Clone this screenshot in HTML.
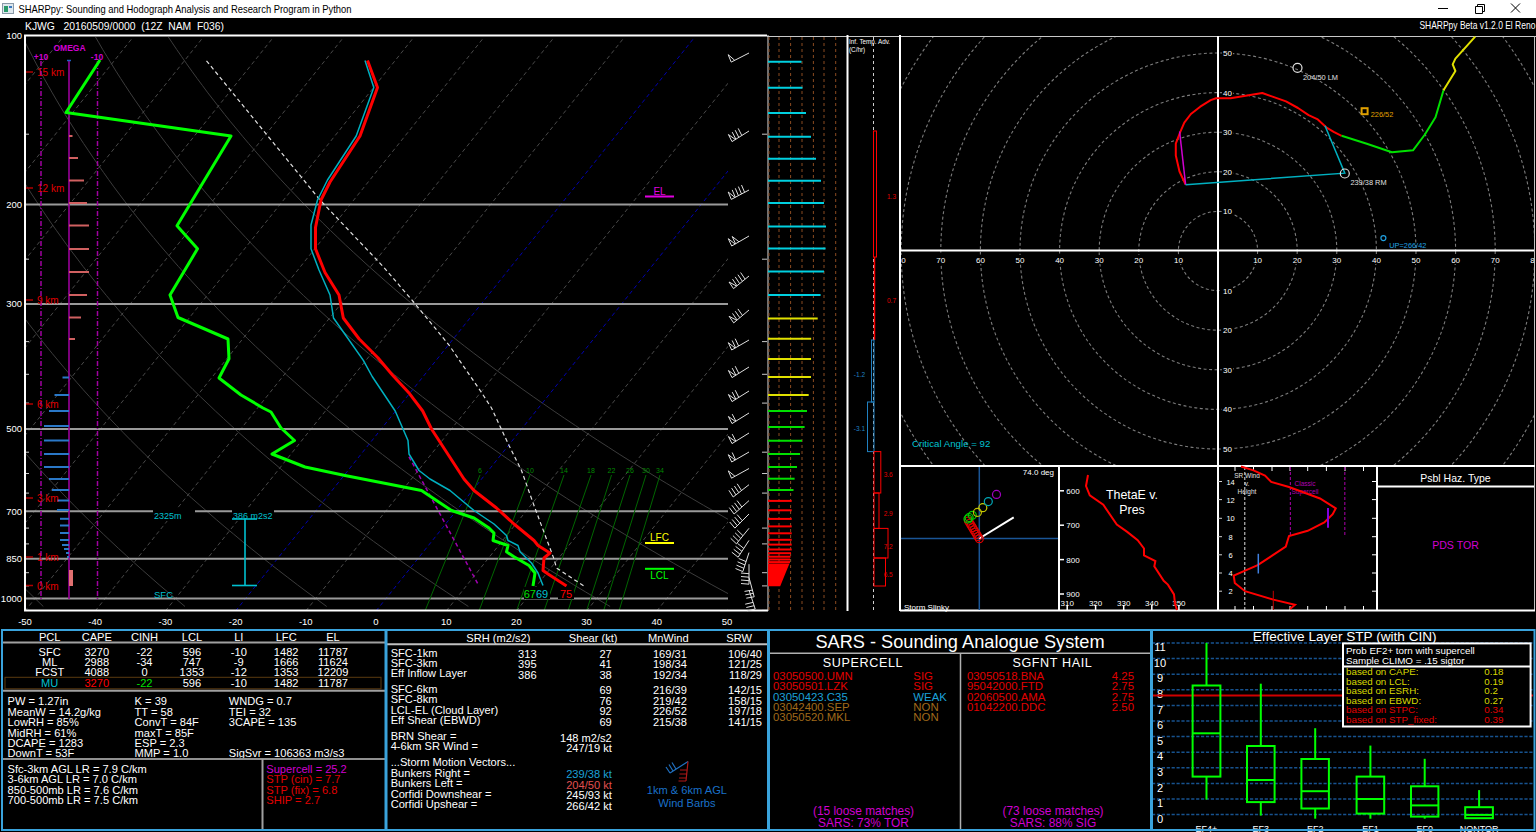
<!DOCTYPE html>
<html><head><meta charset="utf-8"><style>
html,body{margin:0;padding:0;background:#000;width:1536px;height:832px;overflow:hidden}
svg{display:block}
text{font-family:"Liberation Sans",sans-serif}
</style></head><body>
<svg width="1536" height="832" viewBox="0 0 1536 832">
<rect x="0" y="0" width="1536" height="832" fill="#000"/>
<clipPath id="skc"><rect x="26" y="37" width="702" height="573"/></clipPath>
<g clip-path="url(#skc)">
<polyline points="-414.8,35 -414.9,42.2 -415,49.5 -415,56.7 -415,63.9 -415,71.2 -414.9,78.4 -414.7,85.6 -414.5,92.9 -414.3,100.1 -413.9,107.3 -413.6,114.6 -413.2,121.8 -412.7,129 -412.2,136.3 -411.6,143.5 -411,150.7 -410.3,158 -409.6,165.2 -408.8,172.4 -408,179.7 -407.1,186.9 -406.1,194.1 -405.1,201.4 -404,208.6 -402.9,215.8 -401.7,223.1 -400.5,230.3 -399.1,237.5 -397.8,244.8 -396.4,252 -394.9,259.2 -393.3,266.5 -391.7,273.7 -390,280.9 -388.3,288.2 -386.5,295.4 -384.6,302.6 -382.7,309.9 -380.7,317.1 -378.6,324.4 -376.5,331.6 -374.3,338.8 -372,346.1 -369.7,353.3 -367.3,360.5 -364.8,367.8 -362.3,375 -359.7,382.2 -357,389.5 -354.2,396.7 -351.4,403.9 -348.5,411.2 -345.5,418.4 -342.5,425.6 -339.4,432.9 -336.2,440.1 -332.9,447.3 -329.5,454.6 -326.1,461.8 -322.6,469 -319,476.3 -315.3,483.5 -311.6,490.7 -307.8,498 -303.8,505.2 -299.9,512.4 -295.8,519.7 -291.6,526.9 -287.4,534.1 -283.1,541.4 -278.6,548.6 -274.1,555.8 -269.6,563.1 -264.9,570.3 -260.1,577.5 -255.3,584.8 -250.3,592 -245.3,599.2 -240.2,606.5" fill="none" stroke="#3c3c3c" stroke-width="1" />
<polyline points="-342,35 -341.6,42.2 -341,49.5 -340.4,56.7 -339.8,63.9 -339.1,71.2 -338.4,78.4 -337.6,85.6 -336.7,92.9 -335.8,100.1 -334.8,107.3 -333.8,114.6 -332.7,121.8 -331.6,129 -330.3,136.3 -329.1,143.5 -327.8,150.7 -326.4,158 -324.9,165.2 -323.4,172.4 -321.9,179.7 -320.2,186.9 -318.5,194.1 -316.8,201.4 -315,208.6 -313.1,215.8 -311.1,223.1 -309.1,230.3 -307,237.5 -304.9,244.8 -302.7,252 -300.4,259.2 -298,266.5 -295.6,273.7 -293.1,280.9 -290.6,288.2 -287.9,295.4 -285.2,302.6 -282.4,309.9 -279.6,317.1 -276.7,324.4 -273.7,331.6 -270.6,338.8 -267.5,346.1 -264.2,353.3 -260.9,360.5 -257.6,367.8 -254.1,375 -250.6,382.2 -247,389.5 -243.3,396.7 -239.5,403.9 -235.7,411.2 -231.7,418.4 -227.7,425.6 -223.6,432.9 -219.5,440.1 -215.2,447.3 -210.8,454.6 -206.4,461.8 -201.9,469 -197.3,476.3 -192.6,483.5 -187.8,490.7 -182.9,498 -177.9,505.2 -172.9,512.4 -167.7,519.7 -162.5,526.9 -157.1,534.1 -151.7,541.4 -146.2,548.6 -140.6,555.8 -134.8,563.1 -129,570.3 -123.1,577.5 -117.1,584.8 -111,592 -104.8,599.2 -98.4,606.5" fill="none" stroke="#3c3c3c" stroke-width="1" />
<polyline points="-269.3,35 -268.2,42.2 -267.1,49.5 -265.9,56.7 -264.6,63.9 -263.3,71.2 -261.9,78.4 -260.4,85.6 -258.9,92.9 -257.3,100.1 -255.7,107.3 -254,114.6 -252.2,121.8 -250.4,129 -248.5,136.3 -246.5,143.5 -244.5,150.7 -242.4,158 -240.3,165.2 -238,172.4 -235.8,179.7 -233.4,186.9 -231,194.1 -228.5,201.4 -225.9,208.6 -223.3,215.8 -220.5,223.1 -217.8,230.3 -214.9,237.5 -212,244.8 -209,252 -205.9,259.2 -202.7,266.5 -199.5,273.7 -196.2,280.9 -192.8,288.2 -189.4,295.4 -185.8,302.6 -182.2,309.9 -178.5,317.1 -174.7,324.4 -170.9,331.6 -166.9,338.8 -162.9,346.1 -158.8,353.3 -154.6,360.5 -150.3,367.8 -146,375 -141.5,382.2 -137,389.5 -132.4,396.7 -127.7,403.9 -122.9,411.2 -118,418.4 -113,425.6 -107.9,432.9 -102.8,440.1 -97.5,447.3 -92.2,454.6 -86.7,461.8 -81.2,469 -75.5,476.3 -69.8,483.5 -64,490.7 -58.1,498 -52,505.2 -45.9,512.4 -39.7,519.7 -33.3,526.9 -26.9,534.1 -20.4,541.4 -13.7,548.6 -7,555.8 -0.1,563.1 6.8,570.3 13.9,577.5 21.1,584.8 28.4,592 35.8,599.2 43.3,606.5" fill="none" stroke="#3c3c3c" stroke-width="1" />
<polyline points="-196.6,35 -194.9,42.2 -193.1,49.5 -191.3,56.7 -189.4,63.9 -187.4,71.2 -185.4,78.4 -183.3,85.6 -181.1,92.9 -178.9,100.1 -176.6,107.3 -174.2,114.6 -171.7,121.8 -169.2,129 -166.7,136.3 -164,143.5 -161.3,150.7 -158.5,158 -155.6,165.2 -152.7,172.4 -149.7,179.7 -146.6,186.9 -143.4,194.1 -140.2,201.4 -136.8,208.6 -133.4,215.8 -130,223.1 -126.4,230.3 -122.8,237.5 -119.1,244.8 -115.3,252 -111.4,259.2 -107.5,266.5 -103.4,273.7 -99.3,280.9 -95.1,288.2 -90.8,295.4 -86.4,302.6 -82,309.9 -77.4,317.1 -72.8,324.4 -68.1,331.6 -63.2,338.8 -58.3,346.1 -53.3,353.3 -48.3,360.5 -43.1,367.8 -37.8,375 -32.5,382.2 -27,389.5 -21.4,396.7 -15.8,403.9 -10,411.2 -4.2,418.4 1.7,425.6 7.8,432.9 13.9,440.1 20.2,447.3 26.5,454.6 33,461.8 39.5,469 46.2,476.3 53,483.5 59.8,490.7 66.8,498 73.9,505.2 81.1,512.4 88.4,519.7 95.8,526.9 103.3,534.1 111,541.4 118.7,548.6 126.6,555.8 134.6,563.1 142.7,570.3 150.9,577.5 159.2,584.8 167.7,592 176.3,599.2 185,606.5" fill="none" stroke="#3c3c3c" stroke-width="1" />
<polyline points="-123.9,35 -121.5,42.2 -119.1,49.5 -116.7,56.7 -114.1,63.9 -111.5,71.2 -108.9,78.4 -106.1,85.6 -103.3,92.9 -100.4,100.1 -97.4,107.3 -94.4,114.6 -91.3,121.8 -88.1,129 -84.8,136.3 -81.5,143.5 -78,150.7 -74.5,158 -71,165.2 -67.3,172.4 -63.6,179.7 -59.7,186.9 -55.8,194.1 -51.8,201.4 -47.8,208.6 -43.6,215.8 -39.4,223.1 -35.1,230.3 -30.7,237.5 -26.2,244.8 -21.6,252 -16.9,259.2 -12.2,266.5 -7.3,273.7 -2.4,280.9 2.6,288.2 7.8,295.4 13,302.6 18.3,309.9 23.7,317.1 29.2,324.4 34.8,331.6 40.4,338.8 46.2,346.1 52.1,353.3 58.1,360.5 64.2,367.8 70.3,375 76.6,382.2 83,389.5 89.5,396.7 96.1,403.9 102.8,411.2 109.6,418.4 116.5,425.6 123.5,432.9 130.6,440.1 137.9,447.3 145.2,454.6 152.7,461.8 160.2,469 167.9,476.3 175.7,483.5 183.6,490.7 191.6,498 199.8,505.2 208.1,512.4 216.4,519.7 224.9,526.9 233.6,534.1 242.3,541.4 251.2,548.6 260.2,555.8 269.3,563.1 278.5,570.3 287.9,577.5 297.4,584.8 307,592 316.8,599.2 326.7,606.5" fill="none" stroke="#3c3c3c" stroke-width="1" />
<polyline points="-51.1,35 -48.2,42.2 -45.2,49.5 -42.1,56.7 -38.9,63.9 -35.7,71.2 -32.4,78.4 -29,85.6 -25.5,92.9 -21.9,100.1 -18.3,107.3 -14.6,114.6 -10.8,121.8 -6.9,129 -3,136.3 1.1,143.5 5.2,150.7 9.4,158 13.7,165.2 18.1,172.4 22.6,179.7 27.1,186.9 31.7,194.1 36.5,201.4 41.3,208.6 46.2,215.8 51.2,223.1 56.3,230.3 61.5,237.5 66.7,244.8 72.1,252 77.6,259.2 83.1,266.5 88.8,273.7 94.5,280.9 100.4,288.2 106.3,295.4 112.4,302.6 118.5,309.9 124.8,317.1 131.1,324.4 137.6,331.6 144.1,338.8 150.8,346.1 157.5,353.3 164.4,360.5 171.4,367.8 178.5,375 185.7,382.2 193,389.5 200.4,396.7 208,403.9 215.6,411.2 223.4,418.4 231.2,425.6 239.2,432.9 247.3,440.1 255.5,447.3 263.9,454.6 272.4,461.8 280.9,469 289.6,476.3 298.5,483.5 307.4,490.7 316.5,498 325.7,505.2 335,512.4 344.5,519.7 354.1,526.9 363.8,534.1 373.6,541.4 383.6,548.6 393.7,555.8 404,563.1 414.4,570.3 424.9,577.5 435.6,584.8 446.4,592 457.3,599.2 468.4,606.5" fill="none" stroke="#3c3c3c" stroke-width="1" />
<polyline points="21.6,35 25.1,42.2 28.8,49.5 32.5,56.7 36.3,63.9 40.2,71.2 44.1,78.4 48.2,85.6 52.3,92.9 56.5,100.1 60.8,107.3 65.2,114.6 69.7,121.8 74.2,129 78.9,136.3 83.6,143.5 88.5,150.7 93.4,158 98.4,165.2 103.5,172.4 108.7,179.7 113.9,186.9 119.3,194.1 124.8,201.4 130.3,208.6 136,215.8 141.8,223.1 147.6,230.3 153.6,237.5 159.6,244.8 165.8,252 172,259.2 178.4,266.5 184.9,273.7 191.4,280.9 198.1,288.2 204.9,295.4 211.8,302.6 218.7,309.9 225.8,317.1 233.1,324.4 240.4,331.6 247.8,338.8 255.3,346.1 263,353.3 270.8,360.5 278.6,367.8 286.6,375 294.8,382.2 303,389.5 311.3,396.7 319.8,403.9 328.4,411.2 337.1,418.4 346,425.6 354.9,432.9 364,440.1 373.2,447.3 382.6,454.6 392,461.8 401.6,469 411.4,476.3 421.2,483.5 431.2,490.7 441.4,498 451.6,505.2 462,512.4 472.5,519.7 483.2,526.9 494,534.1 505,541.4 516.1,548.6 527.3,555.8 538.7,563.1 550.2,570.3 561.9,577.5 573.7,584.8 585.7,592 597.8,599.2 610.1,606.5" fill="none" stroke="#3c3c3c" stroke-width="1" />
<polyline points="94.3,35 98.5,42.2 102.7,49.5 107.1,56.7 111.5,63.9 116,71.2 120.6,78.4 125.3,85.6 130.1,92.9 135,100.1 140,107.3 145,114.6 150.2,121.8 155.4,129 160.7,136.3 166.2,143.5 171.7,150.7 177.3,158 183,165.2 188.8,172.4 194.8,179.7 200.8,186.9 206.9,194.1 213.1,201.4 219.4,208.6 225.8,215.8 232.3,223.1 239,230.3 245.7,237.5 252.5,244.8 259.5,252 266.5,259.2 273.7,266.5 281,273.7 288.3,280.9 295.8,288.2 303.4,295.4 311.2,302.6 319,309.9 326.9,317.1 335,324.4 343.2,331.6 351.5,338.8 359.9,346.1 368.4,353.3 377.1,360.5 385.9,367.8 394.8,375 403.8,382.2 413,389.5 422.3,396.7 431.7,403.9 441.2,411.2 450.9,418.4 460.7,425.6 470.6,432.9 480.7,440.1 490.9,447.3 501.3,454.6 511.7,461.8 522.3,469 533.1,476.3 544,483.5 555,490.7 566.2,498 577.5,505.2 589,512.4 600.6,519.7 612.4,526.9 624.3,534.1 636.3,541.4 648.5,548.6 660.9,555.8 673.4,563.1 686.1,570.3 698.9,577.5 711.9,584.8 725.1,592 738.4,599.2 751.8,606.5" fill="none" stroke="#3c3c3c" stroke-width="1" />
<polyline points="167,35 171.8,42.2 176.7,49.5 181.7,56.7 186.7,63.9 191.9,71.2 197.1,78.4 202.5,85.6 207.9,92.9 213.5,100.1 219.1,107.3 224.8,114.6 230.6,121.8 236.6,129 242.6,136.3 248.7,143.5 254.9,150.7 261.3,158 267.7,165.2 274.2,172.4 280.9,179.7 287.6,186.9 294.5,194.1 301.4,201.4 308.5,208.6 315.6,215.8 322.9,223.1 330.3,230.3 337.8,237.5 345.4,244.8 353.2,252 361,259.2 369,266.5 377.1,273.7 385.2,280.9 393.6,288.2 402,295.4 410.6,302.6 419.2,309.9 428,317.1 436.9,324.4 446,331.6 455.2,338.8 464.5,346.1 473.9,353.3 483.5,360.5 493.1,367.8 503,375 512.9,382.2 523,389.5 533.2,396.7 543.6,403.9 554.1,411.2 564.7,418.4 575.5,425.6 586.4,432.9 597.4,440.1 608.6,447.3 619.9,454.6 631.4,461.8 643.1,469 654.8,476.3 666.8,483.5 678.8,490.7 691.1,498 703.4,505.2 716,512.4 728.7,519.7 741.5,526.9 754.5,534.1 767.7,541.4 781,548.6 794.5,555.8 808.1,563.1 821.9,570.3 835.9,577.5 850.1,584.8 864.4,592 878.9,599.2 893.5,606.5" fill="none" stroke="#3c3c3c" stroke-width="1" />
<line x1="-747.2" y1="611" x2="-286.4" y2="35" stroke="#4a4a4a" stroke-width="1" stroke-dasharray="4,3"/>
<line x1="-677" y1="611" x2="-216.2" y2="35" stroke="#4a4a4a" stroke-width="1" stroke-dasharray="4,3"/>
<line x1="-606.8" y1="611" x2="-146" y2="35" stroke="#4a4a4a" stroke-width="1" stroke-dasharray="4,3"/>
<line x1="-536.6" y1="611" x2="-75.8" y2="35" stroke="#4a4a4a" stroke-width="1" stroke-dasharray="4,3"/>
<line x1="-466.4" y1="611" x2="-5.6" y2="35" stroke="#4a4a4a" stroke-width="1" stroke-dasharray="4,3"/>
<line x1="-396.2" y1="611" x2="64.6" y2="35" stroke="#4a4a4a" stroke-width="1" stroke-dasharray="4,3"/>
<line x1="-326" y1="611" x2="134.8" y2="35" stroke="#4a4a4a" stroke-width="1" stroke-dasharray="4,3"/>
<line x1="-255.8" y1="611" x2="205" y2="35" stroke="#4a4a4a" stroke-width="1" stroke-dasharray="4,3"/>
<line x1="-185.6" y1="611" x2="275.2" y2="35" stroke="#4a4a4a" stroke-width="1" stroke-dasharray="4,3"/>
<line x1="-115.4" y1="611" x2="345.4" y2="35" stroke="#4a4a4a" stroke-width="1" stroke-dasharray="4,3"/>
<line x1="-45.2" y1="611" x2="415.6" y2="35" stroke="#4a4a4a" stroke-width="1" stroke-dasharray="4,3"/>
<line x1="25" y1="611" x2="485.8" y2="35" stroke="#4a4a4a" stroke-width="1" stroke-dasharray="4,3"/>
<line x1="95.2" y1="611" x2="556" y2="35" stroke="#4a4a4a" stroke-width="1" stroke-dasharray="4,3"/>
<line x1="165.4" y1="611" x2="626.2" y2="35" stroke="#4a4a4a" stroke-width="1" stroke-dasharray="4,3"/>
<line x1="235.6" y1="611" x2="696.4" y2="35" stroke="#0000b0" stroke-width="1" stroke-dasharray="4,3"/>
<line x1="305.8" y1="611" x2="766.6" y2="35" stroke="#4a4a4a" stroke-width="1" stroke-dasharray="4,3"/>
<line x1="376" y1="611" x2="836.8" y2="35" stroke="#0000b0" stroke-width="1" stroke-dasharray="4,3"/>
<line x1="446.2" y1="611" x2="907" y2="35" stroke="#4a4a4a" stroke-width="1" stroke-dasharray="4,3"/>
<line x1="516.4" y1="611" x2="977.2" y2="35" stroke="#4a4a4a" stroke-width="1" stroke-dasharray="4,3"/>
<line x1="586.6" y1="611" x2="1047.4" y2="35" stroke="#4a4a4a" stroke-width="1" stroke-dasharray="4,3"/>
<line x1="656.8" y1="611" x2="1117.6" y2="35" stroke="#4a4a4a" stroke-width="1" stroke-dasharray="4,3"/>
<line x1="727" y1="611" x2="1187.8" y2="35" stroke="#4a4a4a" stroke-width="1" stroke-dasharray="4,3"/>
</g>
<line x1="26" y1="204.6" x2="728" y2="204.6" stroke="#9a9a9a" stroke-width="2" />
<line x1="26" y1="303.9" x2="728" y2="303.9" stroke="#9a9a9a" stroke-width="2" />
<line x1="26" y1="428.9" x2="728" y2="428.9" stroke="#9a9a9a" stroke-width="2" />
<line x1="26" y1="511.2" x2="728" y2="511.2" stroke="#9a9a9a" stroke-width="2" />
<line x1="26" y1="558.7" x2="728" y2="558.7" stroke="#9a9a9a" stroke-width="2" />
<line x1="26" y1="598.5" x2="728" y2="598.5" stroke="#9a9a9a" stroke-width="2" />
<line x1="24" y1="134.2" x2="29" y2="134.2" stroke="#c8c8c8" stroke-width="1" />
<line x1="762" y1="134.2" x2="767" y2="134.2" stroke="#c8c8c8" stroke-width="1" />
<line x1="24" y1="259.2" x2="29" y2="259.2" stroke="#c8c8c8" stroke-width="1" />
<line x1="762" y1="259.2" x2="767" y2="259.2" stroke="#c8c8c8" stroke-width="1" />
<line x1="24" y1="341.6" x2="29" y2="341.6" stroke="#c8c8c8" stroke-width="1" />
<line x1="762" y1="341.6" x2="767" y2="341.6" stroke="#c8c8c8" stroke-width="1" />
<line x1="24" y1="374.3" x2="29" y2="374.3" stroke="#c8c8c8" stroke-width="1" />
<line x1="762" y1="374.3" x2="767" y2="374.3" stroke="#c8c8c8" stroke-width="1" />
<line x1="24" y1="403.1" x2="29" y2="403.1" stroke="#c8c8c8" stroke-width="1" />
<line x1="762" y1="403.1" x2="767" y2="403.1" stroke="#c8c8c8" stroke-width="1" />
<line x1="24" y1="452.2" x2="29" y2="452.2" stroke="#c8c8c8" stroke-width="1" />
<line x1="762" y1="452.2" x2="767" y2="452.2" stroke="#c8c8c8" stroke-width="1" />
<line x1="24" y1="473.5" x2="29" y2="473.5" stroke="#c8c8c8" stroke-width="1" />
<line x1="762" y1="473.5" x2="767" y2="473.5" stroke="#c8c8c8" stroke-width="1" />
<line x1="24" y1="493.1" x2="29" y2="493.1" stroke="#c8c8c8" stroke-width="1" />
<line x1="762" y1="493.1" x2="767" y2="493.1" stroke="#c8c8c8" stroke-width="1" />
<line x1="24" y1="528.1" x2="29" y2="528.1" stroke="#c8c8c8" stroke-width="1" />
<line x1="762" y1="528.1" x2="767" y2="528.1" stroke="#c8c8c8" stroke-width="1" />
<line x1="24" y1="543.9" x2="29" y2="543.9" stroke="#c8c8c8" stroke-width="1" />
<line x1="762" y1="543.9" x2="767" y2="543.9" stroke="#c8c8c8" stroke-width="1" />
<line x1="24" y1="572.7" x2="29" y2="572.7" stroke="#c8c8c8" stroke-width="1" />
<line x1="762" y1="572.7" x2="767" y2="572.7" stroke="#c8c8c8" stroke-width="1" />
<line x1="24" y1="585.9" x2="29" y2="585.9" stroke="#c8c8c8" stroke-width="1" />
<line x1="762" y1="585.9" x2="767" y2="585.9" stroke="#c8c8c8" stroke-width="1" />
<line x1="24" y1="610.4" x2="29" y2="610.4" stroke="#c8c8c8" stroke-width="1" />
<line x1="762" y1="610.4" x2="767" y2="610.4" stroke="#c8c8c8" stroke-width="1" />
<line x1="480" y1="475" x2="425" y2="611" stroke="#006600" stroke-width="1" />
<text x="480" y="473" fill="#008800" font-size="7" text-anchor="middle" >6</text>
<line x1="530" y1="475" x2="479" y2="611" stroke="#006600" stroke-width="1" />
<text x="530" y="473" fill="#008800" font-size="7" text-anchor="middle" >10</text>
<line x1="564" y1="475" x2="516.5" y2="611" stroke="#006600" stroke-width="1" />
<text x="564" y="473" fill="#008800" font-size="7" text-anchor="middle" >14</text>
<line x1="591" y1="475" x2="544" y2="611" stroke="#006600" stroke-width="1" />
<text x="591" y="473" fill="#008800" font-size="7" text-anchor="middle" >18</text>
<line x1="611.5" y1="475" x2="568" y2="611" stroke="#006600" stroke-width="1" />
<text x="611.5" y="473" fill="#008800" font-size="7" text-anchor="middle" >22</text>
<line x1="630" y1="475" x2="586.5" y2="611" stroke="#006600" stroke-width="1" />
<text x="630" y="473" fill="#008800" font-size="7" text-anchor="middle" >26</text>
<line x1="646" y1="475" x2="603.5" y2="611" stroke="#006600" stroke-width="1" />
<text x="646" y="473" fill="#008800" font-size="7" text-anchor="middle" >30</text>
<line x1="660" y1="475" x2="619" y2="611" stroke="#006600" stroke-width="1" />
<text x="660" y="473" fill="#008800" font-size="7" text-anchor="middle" >34</text>
<line x1="69" y1="60" x2="69" y2="599" stroke="#9a009a" stroke-width="1.6" />
<line x1="41" y1="61" x2="41" y2="599" stroke="#a000a0" stroke-width="1.5" stroke-dasharray="5,2,1,2"/>
<line x1="97.5" y1="61" x2="97.5" y2="599" stroke="#a000a0" stroke-width="1.5" stroke-dasharray="5,2,1,2"/>
<line x1="67" y1="60.5" x2="71" y2="60.5" stroke="#2060c0" stroke-width="1.5" />
<text x="69.5" y="50.8" fill="#d000d0" font-size="8.5" text-anchor="middle" font-weight="bold">OMEGA</text>
<text x="41" y="59.8" fill="#d000d0" font-size="8.5" text-anchor="middle" font-weight="bold">+10</text>
<text x="97" y="59.8" fill="#d000d0" font-size="8.5" text-anchor="middle" font-weight="bold">-10</text>
<line x1="69" y1="136" x2="72.5" y2="136" stroke="#d06060" stroke-width="2" />
<line x1="69" y1="158" x2="78" y2="158" stroke="#d06060" stroke-width="2" />
<line x1="69" y1="180.5" x2="84" y2="180.5" stroke="#d06060" stroke-width="2" />
<line x1="69" y1="203" x2="87" y2="203" stroke="#d06060" stroke-width="2" />
<line x1="69" y1="225.5" x2="89" y2="225.5" stroke="#d06060" stroke-width="2" />
<line x1="69" y1="249" x2="89" y2="249" stroke="#d06060" stroke-width="2" />
<line x1="69" y1="272" x2="89" y2="272" stroke="#d06060" stroke-width="2" />
<line x1="69" y1="295" x2="87" y2="295" stroke="#d06060" stroke-width="2" />
<line x1="69" y1="317.5" x2="81" y2="317.5" stroke="#d06060" stroke-width="2" />
<line x1="69" y1="339" x2="75" y2="339" stroke="#d06060" stroke-width="2" />
<line x1="62.5" y1="377.5" x2="69" y2="377.5" stroke="#2a78c8" stroke-width="2" />
<line x1="54.5" y1="395" x2="69" y2="395" stroke="#2a78c8" stroke-width="2" />
<line x1="49" y1="411" x2="69" y2="411" stroke="#2a78c8" stroke-width="2" />
<line x1="44" y1="426" x2="69" y2="426" stroke="#2a78c8" stroke-width="2" />
<line x1="44" y1="440.5" x2="69" y2="440.5" stroke="#2a78c8" stroke-width="2" />
<line x1="44" y1="454" x2="69" y2="454" stroke="#2a78c8" stroke-width="2" />
<line x1="44" y1="467" x2="69" y2="467" stroke="#2a78c8" stroke-width="2" />
<line x1="49" y1="479" x2="69" y2="479" stroke="#2a78c8" stroke-width="2" />
<line x1="52" y1="490" x2="69" y2="490" stroke="#2a78c8" stroke-width="2" />
<line x1="57" y1="500.5" x2="69" y2="500.5" stroke="#2a78c8" stroke-width="2" />
<line x1="57" y1="510" x2="69" y2="510" stroke="#2a78c8" stroke-width="2" />
<line x1="60" y1="518.8" x2="69" y2="518.8" stroke="#2a78c8" stroke-width="2" />
<line x1="60" y1="525.5" x2="69" y2="525.5" stroke="#2a78c8" stroke-width="2" />
<line x1="60" y1="533" x2="69" y2="533" stroke="#2a78c8" stroke-width="2" />
<line x1="60" y1="540" x2="69" y2="540" stroke="#2a78c8" stroke-width="2" />
<line x1="62" y1="545" x2="69" y2="545" stroke="#2a78c8" stroke-width="2" />
<line x1="64" y1="549" x2="69" y2="549" stroke="#2a78c8" stroke-width="2" />
<line x1="66" y1="553" x2="69" y2="553" stroke="#2a78c8" stroke-width="2" />
<line x1="67" y1="557" x2="69" y2="557" stroke="#2a78c8" stroke-width="2" />
<rect x="69" y="570" width="4" height="16" fill="#e07070" stroke="none" stroke-width="1" />
<line x1="25" y1="72" x2="33" y2="72" stroke="#b00000" stroke-width="1.5" />
<text x="37" y="76" fill="#e00000" font-size="10" text-anchor="start" >15 km</text>
<line x1="25" y1="188" x2="33" y2="188" stroke="#b00000" stroke-width="1.5" />
<text x="37" y="192" fill="#e00000" font-size="10" text-anchor="start" >12 km</text>
<line x1="25" y1="300" x2="33" y2="300" stroke="#b00000" stroke-width="1.5" />
<text x="37" y="304" fill="#e00000" font-size="10" text-anchor="start" >9 km</text>
<line x1="25" y1="404" x2="33" y2="404" stroke="#b00000" stroke-width="1.5" />
<text x="37" y="408" fill="#e00000" font-size="10" text-anchor="start" >6 km</text>
<line x1="25" y1="498" x2="33" y2="498" stroke="#b00000" stroke-width="1.5" />
<text x="37" y="502" fill="#e00000" font-size="10" text-anchor="start" >3 km</text>
<line x1="25" y1="557" x2="33" y2="557" stroke="#b00000" stroke-width="1.5" />
<text x="37" y="561" fill="#e00000" font-size="10" text-anchor="start" >1 km</text>
<line x1="25" y1="585.5" x2="33" y2="585.5" stroke="#b00000" stroke-width="1.5" />
<text x="37" y="589.5" fill="#e00000" font-size="10" text-anchor="start" >0 km</text>
<line x1="24" y1="35.5" x2="767" y2="35.5" stroke="#ffffff" stroke-width="2" />
<line x1="25" y1="35" x2="25" y2="611" stroke="#ffffff" stroke-width="2" />
<line x1="24" y1="610.5" x2="768" y2="610.5" stroke="#ffffff" stroke-width="2" />
<text x="22" y="38.5" fill="#ffffff" font-size="9.5" text-anchor="end" >100</text>
<text x="22" y="208.1" fill="#ffffff" font-size="9.5" text-anchor="end" >200</text>
<text x="22" y="307.4" fill="#ffffff" font-size="9.5" text-anchor="end" >300</text>
<text x="22" y="432.4" fill="#ffffff" font-size="9.5" text-anchor="end" >500</text>
<text x="22" y="514.7" fill="#ffffff" font-size="9.5" text-anchor="end" >700</text>
<text x="22" y="562.2" fill="#ffffff" font-size="9.5" text-anchor="end" >850</text>
<text x="22" y="602" fill="#ffffff" font-size="9.5" text-anchor="end" >1000</text>
<text x="25" y="624.5" fill="#ffffff" font-size="9.5" text-anchor="middle" >-50</text>
<text x="95.2" y="624.5" fill="#ffffff" font-size="9.5" text-anchor="middle" >-40</text>
<text x="165.4" y="624.5" fill="#ffffff" font-size="9.5" text-anchor="middle" >-30</text>
<text x="235.6" y="624.5" fill="#ffffff" font-size="9.5" text-anchor="middle" >-20</text>
<text x="305.8" y="624.5" fill="#ffffff" font-size="9.5" text-anchor="middle" >-10</text>
<text x="376" y="624.5" fill="#ffffff" font-size="9.5" text-anchor="middle" >0</text>
<text x="446.2" y="624.5" fill="#ffffff" font-size="9.5" text-anchor="middle" >10</text>
<text x="516.4" y="624.5" fill="#ffffff" font-size="9.5" text-anchor="middle" >20</text>
<text x="586.6" y="624.5" fill="#ffffff" font-size="9.5" text-anchor="middle" >30</text>
<text x="656.8" y="624.5" fill="#ffffff" font-size="9.5" text-anchor="middle" >40</text>
<text x="727" y="624.5" fill="#ffffff" font-size="9.5" text-anchor="middle" >50</text>
<polyline points="206.5,60.8 320,200 384,267.5 414,302.5 449,345 481.5,392.5 491.5,408 509,445.5 521.5,470.5 534,505.5 554,559 556.5,568 584,586" fill="none" stroke="#e0e0e0" stroke-width="1.2" stroke-dasharray="4,3"/>
<line x1="409" y1="456.8" x2="479" y2="586" stroke="#a000b0" stroke-width="1.5" stroke-dasharray="4,3"/>
<polyline points="100,60 66,112.5 231,136 192.5,200 177,225.8 197.5,248.8 170,295 178,317.5 228,339 229,358.8 219,378 241,395 263,408 271,412 281,428 294.5,440.5 272,454 305,467 345,475.5 421.5,490.5 451.5,510.5 474,518 489,528 494,533 493,540.5 508,545.5 506.5,551.8 514,556.8 529,565.5 535,573 533,586" fill="none" stroke="#00ff00" stroke-width="3" stroke-linejoin="round"/>
<polyline points="365,60.5 373.8,87.5 356.2,136 327.5,180 317.5,200 311,225 311,248.8 319,270 330,295 333.5,318 346.2,336 363.5,360.6 372.2,376.5 395.2,411 401.5,425.5 408,440.5 409,454 419,470.5 430,479 450,490.5 474,510.5 494,524 506.5,535.5 508,540.5 518,545.5 520,551.8 531.5,563 538,573 543,585.5" fill="none" stroke="#00b0c0" stroke-width="1.5" stroke-linejoin="round"/>
<polyline points="367.5,60.5 377.5,87.5 360,136 330,182 321,200 315.5,227.5 315.5,248.8 325,272.5 339,295 343.3,318 359.2,339 377.9,357.7 392.4,375 409.7,393.8 422.7,411 431.5,429 464,479 474,490.5 496.5,508 514,524 534,540.5 538,545.5 550,553 544,558 543,570.5 548,574 566.5,586" fill="none" stroke="#ff0000" stroke-width="3" stroke-linejoin="round"/>
<rect x="524" y="587" width="26" height="12" fill="#000" stroke="none" stroke-width="1" />
<text x="536" y="597.5" fill="#00e000" font-size="11" text-anchor="end" >67</text>
<text x="536" y="597.5" fill="#00c0d0" font-size="11" text-anchor="start" >69</text>
<rect x="558" y="587" width="16" height="12" fill="#000" stroke="none" stroke-width="1" />
<text x="566" y="597.5" fill="#ff0000" font-size="11" text-anchor="middle" >75</text>
<line x1="645" y1="543" x2="674" y2="543" stroke="#ffff00" stroke-width="2" />
<text x="659.5" y="541" fill="#ffff00" font-size="10" text-anchor="middle" >LFC</text>
<line x1="645" y1="568.8" x2="674" y2="568.8" stroke="#00ff00" stroke-width="2" />
<text x="659.5" y="579" fill="#00ff00" font-size="10" text-anchor="middle" >LCL</text>
<line x1="645" y1="196.5" x2="674" y2="196.5" stroke="#e000e0" stroke-width="2" />
<text x="659.5" y="195" fill="#e000e0" font-size="10" text-anchor="middle" >EL</text>
<rect x="153" y="509" width="42" height="12" fill="#000" stroke="none" stroke-width="1" />
<text x="154" y="519" fill="#00c0d0" font-size="9" text-anchor="start" >2325m</text>
<rect x="232" y="509" width="42" height="12" fill="#000" stroke="none" stroke-width="1" />
<text x="233" y="519" fill="#00c0d0" font-size="9" text-anchor="start" >386 m2s2</text>
<line x1="232" y1="519" x2="257" y2="519" stroke="#00c0d0" stroke-width="1.6" />
<line x1="245" y1="519" x2="245" y2="585.5" stroke="#00c0d0" stroke-width="1.6" />
<line x1="232" y1="585.5" x2="257" y2="585.5" stroke="#00c0d0" stroke-width="1.6" />
<text x="154" y="598" fill="#00c0d0" font-size="9.5" text-anchor="start" >SFC</text>
<path d="M749,53L731.2,62.1M731.2,62.1L728.2,54.7L734.7,60.3" fill="none" stroke="#e0e0e0" stroke-width="1"/>
<path d="M749,131L732,141.6M732,141.6L728.4,134.5L735.4,139.5M735.9,139.2L732.2,132.1M738.8,137.4L735.2,130.2M741.8,135.5L738.2,128.4" fill="none" stroke="#e0e0e0" stroke-width="1"/>
<path d="M749,190L731.3,199.4M731.3,199.4L728.2,192L734.9,197.5M735.3,197.3L732.2,189.9M738.4,195.6L735.3,188.3M741.5,194L738.4,186.6M744.6,192.3L741.5,185" fill="none" stroke="#e0e0e0" stroke-width="1"/>
<path d="M749,236L731.7,246M731.7,246L728.3,238.7L735.1,244M735.6,243.8L732.2,236.5L739,241.8" fill="none" stroke="#e0e0e0" stroke-width="1"/>
<path d="M749,276L733.5,288.6M733.5,288.6L729,282L736.6,286.1M737,285.8L732.5,279.1M739.7,283.6L735.2,276.9M742.4,281.3L737.9,274.7M745.1,279.1L740.6,272.5" fill="none" stroke="#e0e0e0" stroke-width="1"/>
<path d="M749,310L733.7,322.9M733.7,322.9L729.1,316.3L736.7,320.3M737.1,320L732.5,313.4M739.8,317.7L735.2,311.2M742.5,315.5L737.9,308.9" fill="none" stroke="#e0e0e0" stroke-width="1"/>
<path d="M749,340L731.7,350M731.7,350L728.3,342.7L735.1,348M735.6,347.8L732.2,340.5M738.6,346L735.2,338.7" fill="none" stroke="#e0e0e0" stroke-width="1"/>
<path d="M749,367L732,377.6M732,377.6L728.4,370.5L735.4,375.5M735.9,375.2L732.2,368.1M738.8,373.4L735.2,366.2" fill="none" stroke="#e0e0e0" stroke-width="1"/>
<path d="M749,391L732,401.6M732,401.6L728.4,394.5L735.4,399.5M735.9,399.2L732.2,392.1M738.8,397.4L735.2,390.2" fill="none" stroke="#e0e0e0" stroke-width="1"/>
<path d="M749,413L732,423.6M732,423.6L728.4,416.5L735.4,421.5M735.9,421.2L732.2,414.1" fill="none" stroke="#e0e0e0" stroke-width="1"/>
<path d="M749,433L732,443.6M732,443.6L728.4,436.5L735.4,441.5M735.9,441.2L732.2,434.1" fill="none" stroke="#e0e0e0" stroke-width="1"/>
<path d="M749,452L731.7,462M731.7,462L728.3,454.7L735.1,460M735.6,459.8L732.2,452.5" fill="none" stroke="#e0e0e0" stroke-width="1"/>
<path d="M749,468.5L731.5,478.2M731.5,478.2L728.3,470.9L735,476.3" fill="none" stroke="#e0e0e0" stroke-width="1"/>
<path d="M749,484.7L733.2,497M733.2,497L728.9,490.3M736,494.9L731.6,488.1M738.8,492.7L734.4,486M741.5,490.5L737.2,483.8" fill="none" stroke="#e0e0e0" stroke-width="1"/>
<path d="M749,500.6L734.1,514M734.1,514L729.3,507.6M736.7,511.6L731.9,505.3M739.3,509.3L734.5,502.9M741.9,507L737.1,500.6" fill="none" stroke="#e0e0e0" stroke-width="1"/>
<path d="M749,514L734.9,528.1M734.9,528.1L729.7,522M737.3,525.7L732.2,519.5M739.8,523.2L734.7,517.1M742.3,520.7L737.1,514.6" fill="none" stroke="#e0e0e0" stroke-width="1"/>
<path d="M749,528.3L736.4,543.8M736.4,543.8L730.7,538.3M738.6,541.1L732.9,535.6M740.8,538.4L735.1,532.8M743,535.7L737.3,530.1" fill="none" stroke="#e0e0e0" stroke-width="1"/>
<path d="M749,540.4L738.1,557.2M738.1,557.2L731.8,552.2M740,554.2L733.7,549.3M741.9,551.3L735.6,546.4M743.8,548.4L737.5,543.4" fill="none" stroke="#e0e0e0" stroke-width="1"/>
<path d="M749,552.6L742.8,571.6M742.8,571.6L735.5,568.5M743.9,568.3L736.5,565.2M745,565L737.6,561.8M746.1,561.6L738.7,558.5" fill="none" stroke="#e0e0e0" stroke-width="1"/>
<path d="M749,564.2L749,584.2M749,584.2L741,583.5M749,580.7L741,580M749,577.2L741,576.5M749,573.7L741,573" fill="none" stroke="#e0e0e0" stroke-width="1"/>
<path d="M749,577.5L754.2,596.8M754.2,596.8L746.3,598.2M753.3,593.4L745.4,594.8M752.4,590.1L744.5,591.4" fill="none" stroke="#e0e0e0" stroke-width="1"/>
<path d="M749,590L755.2,609M755.2,609L747.4,610.8M754.1,605.7L746.3,607.5M753,602.4L745.2,604.2" fill="none" stroke="#e0e0e0" stroke-width="1"/>
<line x1="779" y1="37" x2="779" y2="610" stroke="#8a4a20" stroke-width="1" stroke-dasharray="3,3"/>
<line x1="790.6" y1="37" x2="790.6" y2="610" stroke="#8a4a20" stroke-width="1" stroke-dasharray="3,3"/>
<line x1="802" y1="37" x2="802" y2="610" stroke="#8a4a20" stroke-width="1" stroke-dasharray="3,3"/>
<line x1="813.4" y1="37" x2="813.4" y2="610" stroke="#8a4a20" stroke-width="1" stroke-dasharray="3,3"/>
<line x1="824" y1="37" x2="824" y2="610" stroke="#8a4a20" stroke-width="1" stroke-dasharray="3,3"/>
<line x1="835.7" y1="37" x2="835.7" y2="610" stroke="#8a4a20" stroke-width="1" stroke-dasharray="3,3"/>
<line x1="768" y1="35" x2="768" y2="611" stroke="#e0e0e0" stroke-width="1" />
<line x1="769" y1="37" x2="769" y2="610" stroke="#8a4a20" stroke-width="1" stroke-dasharray="3,3"/>
<line x1="767" y1="36.5" x2="1536" y2="36.5" stroke="#c8c8c8" stroke-width="1" />
<line x1="847.5" y1="35" x2="847.5" y2="611" stroke="#ffffff" stroke-width="2" />
<line x1="900" y1="35" x2="900" y2="611" stroke="#ffffff" stroke-width="2" />
<line x1="768" y1="61.7" x2="801.5" y2="61.7" stroke="#00d0e0" stroke-width="2" />
<line x1="768" y1="87.7" x2="802.5" y2="87.7" stroke="#00d0e0" stroke-width="2" />
<line x1="768" y1="113" x2="806" y2="113" stroke="#00d0e0" stroke-width="2" />
<line x1="768" y1="136.7" x2="811" y2="136.7" stroke="#00d0e0" stroke-width="2" />
<line x1="768" y1="158.7" x2="816" y2="158.7" stroke="#00d0e0" stroke-width="2" />
<line x1="768" y1="180.7" x2="821" y2="180.7" stroke="#00d0e0" stroke-width="2" />
<line x1="768" y1="203" x2="824" y2="203" stroke="#00d0e0" stroke-width="2" />
<line x1="768" y1="226.5" x2="826" y2="226.5" stroke="#00d0e0" stroke-width="2" />
<line x1="768" y1="248.5" x2="825.6" y2="248.5" stroke="#00d0e0" stroke-width="2" />
<line x1="768" y1="271.6" x2="824" y2="271.6" stroke="#00d0e0" stroke-width="2" />
<line x1="768" y1="295" x2="820.6" y2="295" stroke="#00d0e0" stroke-width="2" />
<line x1="768" y1="318.5" x2="817.7" y2="318.5" stroke="#e0e000" stroke-width="2" />
<line x1="768" y1="338.8" x2="811.2" y2="338.8" stroke="#e0e000" stroke-width="2" />
<line x1="768" y1="359" x2="811" y2="359" stroke="#e0e000" stroke-width="2" />
<line x1="768" y1="377" x2="811" y2="377" stroke="#e0e000" stroke-width="2" />
<line x1="768" y1="395" x2="808.7" y2="395" stroke="#e0e000" stroke-width="2" />
<line x1="768" y1="411" x2="807" y2="411" stroke="#00e000" stroke-width="2" />
<line x1="768" y1="427" x2="804.6" y2="427" stroke="#00e000" stroke-width="2" />
<line x1="768" y1="440.8" x2="802" y2="440.8" stroke="#00e000" stroke-width="2" />
<line x1="768" y1="454" x2="800" y2="454" stroke="#00e000" stroke-width="2" />
<line x1="768" y1="467" x2="797" y2="467" stroke="#00e000" stroke-width="2" />
<line x1="768" y1="478.7" x2="794.6" y2="478.7" stroke="#00e000" stroke-width="2" />
<line x1="768" y1="490" x2="793.5" y2="490" stroke="#00e000" stroke-width="2" />
<line x1="768" y1="500.9" x2="791.7" y2="500.9" stroke="#ff0000" stroke-width="2" />
<line x1="768" y1="510.3" x2="791.7" y2="510.3" stroke="#ff0000" stroke-width="2" />
<line x1="768" y1="518.9" x2="791.7" y2="518.9" stroke="#ff0000" stroke-width="2" />
<line x1="768" y1="526.4" x2="791.7" y2="526.4" stroke="#ff0000" stroke-width="2" />
<line x1="768" y1="533.3" x2="791.7" y2="533.3" stroke="#ff0000" stroke-width="2" />
<line x1="768" y1="539.8" x2="791.7" y2="539.8" stroke="#ff0000" stroke-width="2" />
<line x1="768" y1="544.6" x2="791.7" y2="544.6" stroke="#ff0000" stroke-width="2" />
<line x1="768" y1="549.5" x2="791.7" y2="549.5" stroke="#ff0000" stroke-width="2" />
<line x1="768" y1="553.2" x2="791" y2="553.2" stroke="#ff0000" stroke-width="2" />
<line x1="768" y1="556.7" x2="790.5" y2="556.7" stroke="#ff0000" stroke-width="2" />
<line x1="768" y1="559.5" x2="790" y2="559.5" stroke="#ff0000" stroke-width="2" />
<line x1="768" y1="562.1" x2="790" y2="562.1" stroke="#ff0000" stroke-width="2" />
<polygon points="768,563.5 789.5,563.5 787.4,568.6 780.2,586.3 768,586.3" fill="#ff0000"/>
<text x="849" y="43.5" fill="#ffffff" font-size="6.3" text-anchor="start" >Inf. Temp. Adv.</text>
<text x="849" y="51.5" fill="#ffffff" font-size="6.3" text-anchor="start" >(C/hr)</text>
<line x1="873.5" y1="37" x2="873.5" y2="610" stroke="#d0d0d0" stroke-width="1" stroke-dasharray="3,3"/>
<rect x="873.5" y="131" width="3" height="126" fill="none" stroke="#ff0000" stroke-width="1" />
<line x1="874.5" y1="257" x2="874.5" y2="340" stroke="#ff0000" stroke-width="1.5" />
<rect x="871.5" y="340" width="2.5" height="62" fill="none" stroke="#2080c0" stroke-width="1" />
<rect x="867.5" y="402" width="6.5" height="49.6" fill="none" stroke="#2080c0" stroke-width="1" />
<rect x="874" y="451.6" width="6.8" height="41.4" fill="none" stroke="#ff0000" stroke-width="1" />
<rect x="874" y="493" width="5" height="35.4" fill="none" stroke="#ff0000" stroke-width="1" />
<rect x="874" y="528.4" width="14" height="29.6" fill="none" stroke="#ff0000" stroke-width="1" />
<rect x="874" y="558" width="11.5" height="28" fill="none" stroke="#ff0000" stroke-width="1" />
<text x="887" y="199" fill="#e00000" font-size="6.5" text-anchor="start" >1.3</text>
<text x="887" y="303" fill="#e00000" font-size="6.5" text-anchor="start" >0.7</text>
<text x="853.8" y="377" fill="#2080c0" font-size="6.5" text-anchor="start" >-1.2</text>
<text x="853.8" y="431" fill="#2080c0" font-size="6.5" text-anchor="start" >-3.1</text>
<text x="883.7" y="477" fill="#e00000" font-size="6.5" text-anchor="start" >3.6</text>
<text x="883.7" y="516" fill="#e00000" font-size="6.5" text-anchor="start" >2.9</text>
<text x="883.7" y="549" fill="#e00000" font-size="6.5" text-anchor="start" >7.2</text>
<text x="883.7" y="577" fill="#e00000" font-size="6.5" text-anchor="start" >6.5</text>
<clipPath id="hdc"><rect x="901" y="37" width="633" height="428"/></clipPath>
<g clip-path="url(#hdc)">
<circle cx="1218" cy="251" r="39.6" fill="none" stroke="#7c7c7c" stroke-width="1.1" stroke-dasharray="3,2.5"/>
<circle cx="1218" cy="251" r="79.2" fill="none" stroke="#7c7c7c" stroke-width="1.1" stroke-dasharray="3,2.5"/>
<circle cx="1218" cy="251" r="118.8" fill="none" stroke="#7c7c7c" stroke-width="1.1" stroke-dasharray="3,2.5"/>
<circle cx="1218" cy="251" r="158.4" fill="none" stroke="#7c7c7c" stroke-width="1.1" stroke-dasharray="3,2.5"/>
<circle cx="1218" cy="251" r="198" fill="none" stroke="#7c7c7c" stroke-width="1.1" stroke-dasharray="3,2.5"/>
<circle cx="1218" cy="251" r="237.6" fill="none" stroke="#7c7c7c" stroke-width="1.1" stroke-dasharray="3,2.5"/>
<circle cx="1218" cy="251" r="277.2" fill="none" stroke="#7c7c7c" stroke-width="1.1" stroke-dasharray="3,2.5"/>
<circle cx="1218" cy="251" r="316.8" fill="none" stroke="#7c7c7c" stroke-width="1.1" stroke-dasharray="3,2.5"/>
<circle cx="1218" cy="251" r="356.4" fill="none" stroke="#7c7c7c" stroke-width="1.1" stroke-dasharray="3,2.5"/>
<circle cx="1218" cy="251" r="396" fill="none" stroke="#7c7c7c" stroke-width="1.1" stroke-dasharray="3,2.5"/>
</g>
<line x1="900" y1="250.5" x2="1535" y2="250.5" stroke="#ffffff" stroke-width="2" />
<line x1="1218" y1="36" x2="1218" y2="465" stroke="#ffffff" stroke-width="2" />
<line x1="1534.5" y1="36" x2="1534.5" y2="611" stroke="#c0c0c0" stroke-width="1" />
<g clip-path="url(#hdc)">
<rect x="1172.9" y="255" width="11" height="9" fill="#000" stroke="none" stroke-width="1" />
<text x="1178.4" y="262.5" fill="#ffffff" font-size="8" text-anchor="middle" >10</text>
<rect x="1252.1" y="255" width="11" height="9" fill="#000" stroke="none" stroke-width="1" />
<text x="1257.6" y="262.5" fill="#ffffff" font-size="8" text-anchor="middle" >10</text>
<rect x="1133.3" y="255" width="11" height="9" fill="#000" stroke="none" stroke-width="1" />
<text x="1138.8" y="262.5" fill="#ffffff" font-size="8" text-anchor="middle" >20</text>
<rect x="1291.7" y="255" width="11" height="9" fill="#000" stroke="none" stroke-width="1" />
<text x="1297.2" y="262.5" fill="#ffffff" font-size="8" text-anchor="middle" >20</text>
<rect x="1093.7" y="255" width="11" height="9" fill="#000" stroke="none" stroke-width="1" />
<text x="1099.2" y="262.5" fill="#ffffff" font-size="8" text-anchor="middle" >30</text>
<rect x="1331.3" y="255" width="11" height="9" fill="#000" stroke="none" stroke-width="1" />
<text x="1336.8" y="262.5" fill="#ffffff" font-size="8" text-anchor="middle" >30</text>
<rect x="1054.1" y="255" width="11" height="9" fill="#000" stroke="none" stroke-width="1" />
<text x="1059.6" y="262.5" fill="#ffffff" font-size="8" text-anchor="middle" >40</text>
<rect x="1370.9" y="255" width="11" height="9" fill="#000" stroke="none" stroke-width="1" />
<text x="1376.4" y="262.5" fill="#ffffff" font-size="8" text-anchor="middle" >40</text>
<rect x="1014.5" y="255" width="11" height="9" fill="#000" stroke="none" stroke-width="1" />
<text x="1020" y="262.5" fill="#ffffff" font-size="8" text-anchor="middle" >50</text>
<rect x="1410.5" y="255" width="11" height="9" fill="#000" stroke="none" stroke-width="1" />
<text x="1416" y="262.5" fill="#ffffff" font-size="8" text-anchor="middle" >50</text>
<rect x="974.9" y="255" width="11" height="9" fill="#000" stroke="none" stroke-width="1" />
<text x="980.4" y="262.5" fill="#ffffff" font-size="8" text-anchor="middle" >60</text>
<rect x="1450.1" y="255" width="11" height="9" fill="#000" stroke="none" stroke-width="1" />
<text x="1455.6" y="262.5" fill="#ffffff" font-size="8" text-anchor="middle" >60</text>
<rect x="935.3" y="255" width="11" height="9" fill="#000" stroke="none" stroke-width="1" />
<text x="940.8" y="262.5" fill="#ffffff" font-size="8" text-anchor="middle" >70</text>
<rect x="1489.7" y="255" width="11" height="9" fill="#000" stroke="none" stroke-width="1" />
<text x="1495.2" y="262.5" fill="#ffffff" font-size="8" text-anchor="middle" >70</text>
<rect x="895.7" y="255" width="11" height="9" fill="#000" stroke="none" stroke-width="1" />
<text x="901.2" y="262.5" fill="#ffffff" font-size="8" text-anchor="middle" >80</text>
<rect x="1529.3" y="255" width="11" height="9" fill="#000" stroke="none" stroke-width="1" />
<text x="1534.8" y="262.5" fill="#ffffff" font-size="8" text-anchor="middle" >80</text>
<rect x="1222" y="206.9" width="11" height="9" fill="#000" stroke="none" stroke-width="1" />
<text x="1227.5" y="214.4" fill="#ffffff" font-size="8" text-anchor="middle" >10</text>
<rect x="1222" y="286.1" width="11" height="9" fill="#000" stroke="none" stroke-width="1" />
<text x="1227.5" y="293.6" fill="#ffffff" font-size="8" text-anchor="middle" >10</text>
<rect x="1222" y="167.3" width="11" height="9" fill="#000" stroke="none" stroke-width="1" />
<text x="1227.5" y="174.8" fill="#ffffff" font-size="8" text-anchor="middle" >20</text>
<rect x="1222" y="325.7" width="11" height="9" fill="#000" stroke="none" stroke-width="1" />
<text x="1227.5" y="333.2" fill="#ffffff" font-size="8" text-anchor="middle" >20</text>
<rect x="1222" y="127.7" width="11" height="9" fill="#000" stroke="none" stroke-width="1" />
<text x="1227.5" y="135.2" fill="#ffffff" font-size="8" text-anchor="middle" >30</text>
<rect x="1222" y="365.3" width="11" height="9" fill="#000" stroke="none" stroke-width="1" />
<text x="1227.5" y="372.8" fill="#ffffff" font-size="8" text-anchor="middle" >30</text>
<rect x="1222" y="88.1" width="11" height="9" fill="#000" stroke="none" stroke-width="1" />
<text x="1227.5" y="95.6" fill="#ffffff" font-size="8" text-anchor="middle" >40</text>
<rect x="1222" y="404.9" width="11" height="9" fill="#000" stroke="none" stroke-width="1" />
<text x="1227.5" y="412.4" fill="#ffffff" font-size="8" text-anchor="middle" >40</text>
<rect x="1222" y="48.5" width="11" height="9" fill="#000" stroke="none" stroke-width="1" />
<text x="1227.5" y="56" fill="#ffffff" font-size="8" text-anchor="middle" >50</text>
<rect x="1222" y="444.5" width="11" height="9" fill="#000" stroke="none" stroke-width="1" />
<text x="1227.5" y="452" fill="#ffffff" font-size="8" text-anchor="middle" >50</text>
</g>
<polyline points="1185.6,184.7 1179.5,171.5 1175.8,155.6 1175.8,150 1175.8,143.7 1180.3,131.8 1184.3,122.6 1190.9,114 1200.2,106.7 1210.7,100.1 1216,98.2 1230.5,98.2 1262.3,93 1286,101.4 1298,108 1308.6,115.2 1317.8,119.4 1327,127.9 1333.7,131.8 1341.6,135.8" fill="none" stroke="#ff0000" stroke-width="2" stroke-linejoin="round"/>
<polyline points="1341.6,135.8 1366.8,143.7 1391.9,152.2 1413,150.3 1424.9,134.5 1435.5,117.3 1443.5,90.3" fill="none" stroke="#00e000" stroke-width="2" stroke-linejoin="round"/>
<polyline points="1443.5,90.3 1455.4,71 1452.7,64.4 1455.4,58.6 1475.2,36.6" fill="none" stroke="#e0e000" stroke-width="2" stroke-linejoin="round"/>
<line x1="1179.6" y1="131.5" x2="1185.6" y2="184.7" stroke="#d000d0" stroke-width="1.5" />
<polyline points="1185.6,184.7 1344.8,173.2 1325,125.7" fill="none" stroke="#00b0c0" stroke-width="1.5" />
<circle cx="1297.5" cy="67.8" r="4.5" fill="none" stroke="#e0e0e0" stroke-width="1.2"/>
<text x="1303" y="79.5" fill="#e0e0e0" font-size="7.4" text-anchor="start" >204/50 LM</text>
<circle cx="1344.8" cy="173.5" r="4.5" fill="none" stroke="#e0e0e0" stroke-width="1.2"/>
<text x="1350.4" y="185" fill="#e0e0e0" font-size="7.4" text-anchor="start" >239/38 RM</text>
<rect x="1361.6" y="108.2" width="6" height="6" fill="none" stroke="#e0a000" stroke-width="2" />
<text x="1370.7" y="116.5" fill="#e0a000" font-size="7.4" text-anchor="start" >226/52</text>
<circle cx="1383.4" cy="238.1" r="2.5" fill="none" stroke="#20a0e0" stroke-width="1.2"/>
<text x="1389.2" y="247.5" fill="#20a0e0" font-size="7.4" text-anchor="start" >UP=266/42</text>
<text x="912" y="446.5" fill="#00c0d0" font-size="9.7" text-anchor="start" >Critical Angle = 92</text>
<line x1="900" y1="466" x2="1535" y2="466" stroke="#ffffff" stroke-width="2" />
<line x1="900" y1="610.5" x2="1535" y2="610.5" stroke="#ffffff" stroke-width="2" />
<line x1="1059" y1="466" x2="1059" y2="611" stroke="#ffffff" stroke-width="2" />
<line x1="1218" y1="466" x2="1218" y2="611" stroke="#ffffff" stroke-width="2" />
<line x1="1377" y1="466" x2="1377" y2="611" stroke="#ffffff" stroke-width="2" />
<line x1="901" y1="538.5" x2="1058" y2="538.5" stroke="#1a5596" stroke-width="1.5" />
<line x1="979.3" y1="467" x2="979.3" y2="610" stroke="#1a5596" stroke-width="1.5" />
<text x="1054" y="475" fill="#ffffff" font-size="8" text-anchor="end" >74.0 deg</text>
<text x="904" y="609.5" fill="#ffffff" font-size="8" text-anchor="start" >Storm Slinky</text>
<line x1="979.3" y1="538.5" x2="1013.7" y2="517.3" stroke="#ffffff" stroke-width="2" />
<circle cx="968.5" cy="521.0" r="4" fill="none" stroke="#e00000" stroke-width="1.2"/>
<circle cx="969.9" cy="523.2" r="4" fill="none" stroke="#e00000" stroke-width="1.2"/>
<circle cx="971.2" cy="525.4" r="4" fill="none" stroke="#e00000" stroke-width="1.2"/>
<circle cx="972.5" cy="527.6" r="4" fill="none" stroke="#e00000" stroke-width="1.2"/>
<circle cx="973.9" cy="529.9" r="4" fill="none" stroke="#e00000" stroke-width="1.2"/>
<circle cx="975.2" cy="532.1" r="4" fill="none" stroke="#e00000" stroke-width="1.2"/>
<circle cx="976.6" cy="534.3" r="4" fill="none" stroke="#e00000" stroke-width="1.2"/>
<circle cx="977.9" cy="536.5" r="4" fill="none" stroke="#e00000" stroke-width="1.2"/>
<circle cx="979.3" cy="538.7" r="4" fill="none" stroke="#e00000" stroke-width="1.2"/>
<circle cx="968" cy="519" r="4" fill="none" stroke="#00d000" stroke-width="1.2"/>
<circle cx="969.1" cy="517.5" r="4" fill="none" stroke="#00d000" stroke-width="1.2"/>
<circle cx="972.3" cy="515.3" r="4" fill="none" stroke="#00c800" stroke-width="1.2"/>
<circle cx="977.4" cy="512.4" r="4" fill="none" stroke="#c0c000" stroke-width="1.2"/>
<circle cx="982.8" cy="507.7" r="4" fill="none" stroke="#c8c800" stroke-width="1.2"/>
<circle cx="988.3" cy="501.6" r="4" fill="none" stroke="#00a8b8" stroke-width="1.2"/>
<circle cx="996.5" cy="494.4" r="4" fill="none" stroke="#a000c0" stroke-width="1.2"/>
<line x1="1059" y1="490.8" x2="1064" y2="490.8" stroke="#ffffff" stroke-width="1.5" />
<text x="1073" y="493.8" fill="#ffffff" font-size="8" text-anchor="middle" >600</text>
<line x1="1059" y1="525.2" x2="1064" y2="525.2" stroke="#ffffff" stroke-width="1.5" />
<text x="1073" y="528.2" fill="#ffffff" font-size="8" text-anchor="middle" >700</text>
<line x1="1059" y1="559.6" x2="1064" y2="559.6" stroke="#ffffff" stroke-width="1.5" />
<text x="1073" y="562.6" fill="#ffffff" font-size="8" text-anchor="middle" >800</text>
<line x1="1059" y1="594" x2="1064" y2="594" stroke="#ffffff" stroke-width="1.5" />
<text x="1073" y="597" fill="#ffffff" font-size="8" text-anchor="middle" >900</text>
<line x1="1067.2" y1="605" x2="1067.2" y2="610" stroke="#ffffff" stroke-width="1.5" />
<text x="1067.2" y="605.5" fill="#ffffff" font-size="8" text-anchor="middle" >310</text>
<line x1="1095.6" y1="605" x2="1095.6" y2="610" stroke="#ffffff" stroke-width="1.5" />
<text x="1095.6" y="605.5" fill="#ffffff" font-size="8" text-anchor="middle" >320</text>
<line x1="1123.7" y1="605" x2="1123.7" y2="610" stroke="#ffffff" stroke-width="1.5" />
<text x="1123.7" y="605.5" fill="#ffffff" font-size="8" text-anchor="middle" >330</text>
<line x1="1151.8" y1="605" x2="1151.8" y2="610" stroke="#ffffff" stroke-width="1.5" />
<text x="1151.8" y="605.5" fill="#ffffff" font-size="8" text-anchor="middle" >340</text>
<line x1="1178.9" y1="605" x2="1178.9" y2="610" stroke="#ffffff" stroke-width="1.5" />
<text x="1178.9" y="605.5" fill="#ffffff" font-size="8" text-anchor="middle" >350</text>
<text x="1132" y="499" fill="#ffffff" font-size="12.4" text-anchor="middle" >ThetaE v.</text>
<text x="1132" y="514" fill="#ffffff" font-size="12.4" text-anchor="middle" >Pres</text>
<polyline points="1088,475 1086,486 1089.8,495.4 1103.3,504.8 1116.8,524.6 1127.2,531.9 1137.7,540.2 1144,548.5 1144,555.4 1155.4,561 1154.3,566.2 1163.7,580.8 1167.9,584.6 1174,594.4 1175,603.8 1177,610" fill="none" stroke="#ff0000" stroke-width="2" />
<text x="1230.6" y="484.5" fill="#ffffff" font-size="7.5" text-anchor="middle" >14</text>
<line x1="1372" y1="481.5" x2="1377" y2="481.5" stroke="#ffffff" stroke-width="1" />
<line x1="1218" y1="481.5" x2="1222" y2="481.5" stroke="#d0d0d0" stroke-width="1" />
<text x="1230.6" y="502.6" fill="#ffffff" font-size="7.5" text-anchor="middle" >12</text>
<line x1="1372" y1="499.6" x2="1377" y2="499.6" stroke="#ffffff" stroke-width="1" />
<line x1="1218" y1="499.6" x2="1222" y2="499.6" stroke="#d0d0d0" stroke-width="1" />
<text x="1230.6" y="521.3" fill="#ffffff" font-size="7.5" text-anchor="middle" >10</text>
<line x1="1372" y1="518.3" x2="1377" y2="518.3" stroke="#ffffff" stroke-width="1" />
<line x1="1218" y1="518.3" x2="1222" y2="518.3" stroke="#d0d0d0" stroke-width="1" />
<text x="1230.6" y="539.7" fill="#ffffff" font-size="7.5" text-anchor="middle" >8</text>
<line x1="1372" y1="536.7" x2="1377" y2="536.7" stroke="#ffffff" stroke-width="1" />
<line x1="1218" y1="536.7" x2="1222" y2="536.7" stroke="#d0d0d0" stroke-width="1" />
<text x="1230.6" y="557.8" fill="#ffffff" font-size="7.5" text-anchor="middle" >6</text>
<line x1="1372" y1="554.8" x2="1377" y2="554.8" stroke="#ffffff" stroke-width="1" />
<line x1="1218" y1="554.8" x2="1222" y2="554.8" stroke="#d0d0d0" stroke-width="1" />
<text x="1230.6" y="576" fill="#ffffff" font-size="7.5" text-anchor="middle" >4</text>
<line x1="1372" y1="573" x2="1377" y2="573" stroke="#ffffff" stroke-width="1" />
<line x1="1218" y1="573" x2="1222" y2="573" stroke="#d0d0d0" stroke-width="1" />
<text x="1230.6" y="594.2" fill="#ffffff" font-size="7.5" text-anchor="middle" >2</text>
<line x1="1372" y1="591.2" x2="1377" y2="591.2" stroke="#ffffff" stroke-width="1" />
<line x1="1218" y1="591.2" x2="1222" y2="591.2" stroke="#d0d0d0" stroke-width="1" />
<line x1="1235" y1="467" x2="1235" y2="471" stroke="#ffffff" stroke-width="1" />
<line x1="1235" y1="606" x2="1235" y2="610" stroke="#ffffff" stroke-width="1" />
<line x1="1253.5" y1="467" x2="1253.5" y2="471" stroke="#ffffff" stroke-width="1" />
<line x1="1253.5" y1="606" x2="1253.5" y2="610" stroke="#ffffff" stroke-width="1" />
<line x1="1272" y1="467" x2="1272" y2="471" stroke="#ffffff" stroke-width="1" />
<line x1="1272" y1="606" x2="1272" y2="610" stroke="#ffffff" stroke-width="1" />
<line x1="1290" y1="467" x2="1290" y2="471" stroke="#ffffff" stroke-width="1" />
<line x1="1290" y1="606" x2="1290" y2="610" stroke="#ffffff" stroke-width="1" />
<line x1="1307.7" y1="467" x2="1307.7" y2="471" stroke="#ffffff" stroke-width="1" />
<line x1="1307.7" y1="606" x2="1307.7" y2="610" stroke="#ffffff" stroke-width="1" />
<line x1="1326.4" y1="467" x2="1326.4" y2="471" stroke="#ffffff" stroke-width="1" />
<line x1="1326.4" y1="606" x2="1326.4" y2="610" stroke="#ffffff" stroke-width="1" />
<line x1="1345" y1="467" x2="1345" y2="471" stroke="#ffffff" stroke-width="1" />
<line x1="1345" y1="606" x2="1345" y2="610" stroke="#ffffff" stroke-width="1" />
<line x1="1363.5" y1="467" x2="1363.5" y2="471" stroke="#ffffff" stroke-width="1" />
<line x1="1363.5" y1="606" x2="1363.5" y2="610" stroke="#ffffff" stroke-width="1" />
<line x1="1244.8" y1="467" x2="1244.8" y2="610" stroke="#e0e0e0" stroke-width="1" stroke-dasharray="3,2"/>
<line x1="1290.4" y1="467" x2="1290.4" y2="535" stroke="#900090" stroke-width="1.2" stroke-dasharray="3,2"/>
<line x1="1344.8" y1="467" x2="1344.8" y2="535" stroke="#900090" stroke-width="1.2" stroke-dasharray="3,2"/>
<text x="1247" y="478" fill="#e0e0e0" font-size="6.5" text-anchor="middle" >SR Wind</text>
<text x="1247" y="486" fill="#e0e0e0" font-size="6.5" text-anchor="middle" >v.</text>
<text x="1247" y="494" fill="#e0e0e0" font-size="6.5" text-anchor="middle" >Height</text>
<text x="1305" y="486" fill="#b000b0" font-size="6.5" text-anchor="middle" >Classic</text>
<text x="1305" y="494" fill="#b000b0" font-size="6.5" text-anchor="middle" >Supercell</text>
<polyline points="1241,466.5 1253.5,470.4 1265,475.6 1271.2,481.9 1289,487 1320,498.5 1335.8,508.3 1332.7,514.2 1324.3,522.5 1307.7,530.8 1289,536 1285.8,546.5 1257.7,565.2 1233.7,575.6 1234.8,583 1245,591.2 1273.3,599.6 1295,604.8 1290,609" fill="none" stroke="#ff0000" stroke-width="2" />
<line x1="1258.3" y1="553.8" x2="1258.3" y2="573.5" stroke="#4080e0" stroke-width="1.5" />
<line x1="1328" y1="508" x2="1328" y2="527.7" stroke="#8000e0" stroke-width="2" />
<line x1="1273.3" y1="590.8" x2="1273.3" y2="610" stroke="#c00000" stroke-width="1" />
<line x1="1377" y1="486.5" x2="1534" y2="486.5" stroke="#ffffff" stroke-width="2" />
<text x="1455.5" y="481.5" fill="#ffffff" font-size="10.5" text-anchor="middle" >Psbl Haz. Type</text>
<text x="1455.5" y="549" fill="#d000d0" font-size="10.6" text-anchor="middle" >PDS TOR</text>
<rect x="2" y="630" width="383.5" height="200" fill="#000" stroke="none" stroke-width="1" />
<rect x="386.5" y="630" width="381.5" height="200" fill="#000" stroke="none" stroke-width="1" />
<rect x="769" y="630" width="382" height="200" fill="#000" stroke="none" stroke-width="1" />
<rect x="1152" y="630" width="382.5" height="200" fill="#000" stroke="none" stroke-width="1" />
<text x="49.7" y="641" fill="#ffffff" font-size="11.1" text-anchor="middle" >PCL</text>
<text x="96.8" y="641" fill="#ffffff" font-size="11.1" text-anchor="middle" >CAPE</text>
<text x="144.5" y="641" fill="#ffffff" font-size="11.1" text-anchor="middle" >CINH</text>
<text x="191.9" y="641" fill="#ffffff" font-size="11.1" text-anchor="middle" >LCL</text>
<text x="238.8" y="641" fill="#ffffff" font-size="11.1" text-anchor="middle" >LI</text>
<text x="286.2" y="641" fill="#ffffff" font-size="11.1" text-anchor="middle" >LFC</text>
<text x="333" y="641" fill="#ffffff" font-size="11.1" text-anchor="middle" >EL</text>
<line x1="3" y1="642.4" x2="385" y2="642.4" stroke="#a0a0a0" stroke-width="2" />
<text x="49.7" y="655.5" fill="#ffffff" font-size="11.1" text-anchor="middle" >SFC</text>
<text x="96.8" y="655.5" fill="#ffffff" font-size="11.1" text-anchor="middle" >3270</text>
<text x="144.5" y="655.5" fill="#ffffff" font-size="11.1" text-anchor="middle" >-22</text>
<text x="191.9" y="655.5" fill="#ffffff" font-size="11.1" text-anchor="middle" >596</text>
<text x="238.8" y="655.5" fill="#ffffff" font-size="11.1" text-anchor="middle" >-10</text>
<text x="286.2" y="655.5" fill="#ffffff" font-size="11.1" text-anchor="middle" >1482</text>
<text x="333" y="655.5" fill="#ffffff" font-size="11.1" text-anchor="middle" >11787</text>
<text x="49.7" y="665.9" fill="#ffffff" font-size="11.1" text-anchor="middle" >ML</text>
<text x="96.8" y="665.9" fill="#ffffff" font-size="11.1" text-anchor="middle" >2988</text>
<text x="144.5" y="665.9" fill="#ffffff" font-size="11.1" text-anchor="middle" >-34</text>
<text x="191.9" y="665.9" fill="#ffffff" font-size="11.1" text-anchor="middle" >747</text>
<text x="238.8" y="665.9" fill="#ffffff" font-size="11.1" text-anchor="middle" >-9</text>
<text x="286.2" y="665.9" fill="#ffffff" font-size="11.1" text-anchor="middle" >1666</text>
<text x="333" y="665.9" fill="#ffffff" font-size="11.1" text-anchor="middle" >11624</text>
<text x="49.7" y="676.3" fill="#ffffff" font-size="11.1" text-anchor="middle" >FCST</text>
<text x="96.8" y="676.3" fill="#ffffff" font-size="11.1" text-anchor="middle" >4088</text>
<text x="144.5" y="676.3" fill="#ffffff" font-size="11.1" text-anchor="middle" >0</text>
<text x="191.9" y="676.3" fill="#ffffff" font-size="11.1" text-anchor="middle" >1353</text>
<text x="238.8" y="676.3" fill="#ffffff" font-size="11.1" text-anchor="middle" >-12</text>
<text x="286.2" y="676.3" fill="#ffffff" font-size="11.1" text-anchor="middle" >1353</text>
<text x="333" y="676.3" fill="#ffffff" font-size="11.1" text-anchor="middle" >12209</text>
<text x="49.7" y="686.7" fill="#00c0d0" font-size="11.1" text-anchor="middle" >MU</text>
<text x="96.8" y="686.7" fill="#ff0000" font-size="11.1" text-anchor="middle" >3270</text>
<text x="144.5" y="686.7" fill="#00e000" font-size="11.1" text-anchor="middle" >-22</text>
<text x="191.9" y="686.7" fill="#ffffff" font-size="11.1" text-anchor="middle" >596</text>
<text x="238.8" y="686.7" fill="#ffffff" font-size="11.1" text-anchor="middle" >-10</text>
<text x="286.2" y="686.7" fill="#ffffff" font-size="11.1" text-anchor="middle" >1482</text>
<text x="333" y="686.7" fill="#ffffff" font-size="11.1" text-anchor="middle" >11787</text>
<rect x="5" y="677.3" width="376" height="11.5" fill="none" stroke="#5a3a10" stroke-width="1" />
<line x1="3" y1="690.8" x2="385" y2="690.8" stroke="#a0a0a0" stroke-width="2" />
<text x="7.6" y="705.3" fill="#ffffff" font-size="11.1" text-anchor="start" >PW = 1.27in</text>
<text x="134.6" y="705.3" fill="#ffffff" font-size="11.1" text-anchor="start" >K = 39</text>
<text x="228.8" y="705.3" fill="#ffffff" font-size="11.1" text-anchor="start" >WNDG = 0.7</text>
<text x="7.6" y="715.7" fill="#ffffff" font-size="11.1" text-anchor="start" >MeanW = 14.2g/kg</text>
<text x="134.6" y="715.7" fill="#ffffff" font-size="11.1" text-anchor="start" >TT = 58</text>
<text x="228.8" y="715.7" fill="#ffffff" font-size="11.1" text-anchor="start" >TEI = 32</text>
<text x="7.6" y="726.1" fill="#ffffff" font-size="11.1" text-anchor="start" >LowRH = 85%</text>
<text x="134.6" y="726.1" fill="#ffffff" font-size="11.1" text-anchor="start" >ConvT = 84F</text>
<text x="228.8" y="726.1" fill="#ffffff" font-size="11.1" text-anchor="start" >3CAPE = 135</text>
<text x="7.6" y="736.5" fill="#ffffff" font-size="11.1" text-anchor="start" >MidRH = 61%</text>
<text x="134.6" y="736.5" fill="#ffffff" font-size="11.1" text-anchor="start" >maxT = 85F</text>
<text x="7.6" y="746.9" fill="#ffffff" font-size="11.1" text-anchor="start" >DCAPE = 1283</text>
<text x="134.6" y="746.9" fill="#ffffff" font-size="11.1" text-anchor="start" >ESP = 2.3</text>
<text x="7.6" y="757.3" fill="#ffffff" font-size="11.1" text-anchor="start" >DownT = 53F</text>
<text x="134.6" y="757.3" fill="#ffffff" font-size="11.1" text-anchor="start" >MMP = 1.0</text>
<text x="228.8" y="757.3" fill="#ffffff" font-size="11.1" text-anchor="start" >SigSvr = 106363 m3/s3</text>
<line x1="3" y1="758.9" x2="385" y2="758.9" stroke="#909090" stroke-width="2" />
<line x1="262.5" y1="759" x2="262.5" y2="829" stroke="#a0a0a0" stroke-width="2" />
<text x="7.6" y="772.9" fill="#ffffff" font-size="11.1" text-anchor="start" >Sfc-3km AGL LR = 7.9 C/km</text>
<text x="7.6" y="783.4" fill="#ffffff" font-size="11.1" text-anchor="start" >3-6km AGL LR = 7.0 C/km</text>
<text x="7.6" y="793.8" fill="#ffffff" font-size="11.1" text-anchor="start" >850-500mb LR = 7.6 C/km</text>
<text x="7.6" y="804.2" fill="#ffffff" font-size="11.1" text-anchor="start" >700-500mb LR = 7.5 C/km</text>
<text x="266.3" y="772.9" fill="#d000d0" font-size="11.1" text-anchor="start" >Supercell = 25.2</text>
<text x="266.3" y="783.4" fill="#e00000" font-size="11.1" text-anchor="start" >STP (cin) = 7.7</text>
<text x="266.3" y="793.8" fill="#e00000" font-size="11.1" text-anchor="start" >STP (fix) = 6.8</text>
<text x="266.3" y="804.2" fill="#e00000" font-size="11.1" text-anchor="start" >SHIP = 2.7</text>
<text x="498.4" y="642.3" fill="#ffffff" font-size="11.1" text-anchor="middle" >SRH (m2/s2)</text>
<text x="593.2" y="642.3" fill="#ffffff" font-size="11.1" text-anchor="middle" >Shear (kt)</text>
<text x="668.3" y="642.3" fill="#ffffff" font-size="11.1" text-anchor="middle" >MnWind</text>
<text x="739.1" y="642.3" fill="#ffffff" font-size="11.1" text-anchor="middle" >SRW</text>
<line x1="386" y1="644.2" x2="767" y2="644.2" stroke="#c0c0c0" stroke-width="2" />
<text x="390.7" y="656.6" fill="#ffffff" font-size="11.1" text-anchor="start" >SFC-1km</text>
<text x="536.6" y="657.9" fill="#ffffff" font-size="11.1" text-anchor="end" >313</text>
<text x="611.8" y="657.9" fill="#ffffff" font-size="11.1" text-anchor="end" >27</text>
<text x="686.9" y="657.9" fill="#ffffff" font-size="11.1" text-anchor="end" >169/31</text>
<text x="762" y="657.9" fill="#ffffff" font-size="11.1" text-anchor="end" >106/40</text>
<text x="390.7" y="666.8" fill="#ffffff" font-size="11.1" text-anchor="start" >SFC-3km</text>
<text x="536.6" y="668.1" fill="#ffffff" font-size="11.1" text-anchor="end" >395</text>
<text x="611.8" y="668.1" fill="#ffffff" font-size="11.1" text-anchor="end" >41</text>
<text x="686.9" y="668.1" fill="#ffffff" font-size="11.1" text-anchor="end" >198/34</text>
<text x="762" y="668.1" fill="#ffffff" font-size="11.1" text-anchor="end" >121/25</text>
<text x="390.7" y="677.3" fill="#ffffff" font-size="11.1" text-anchor="start" >Eff Inflow Layer</text>
<text x="536.6" y="678.6" fill="#ffffff" font-size="11.1" text-anchor="end" >386</text>
<text x="611.8" y="678.6" fill="#ffffff" font-size="11.1" text-anchor="end" >38</text>
<text x="686.9" y="678.6" fill="#ffffff" font-size="11.1" text-anchor="end" >192/34</text>
<text x="762" y="678.6" fill="#ffffff" font-size="11.1" text-anchor="end" >118/29</text>
<text x="390.7" y="693.1" fill="#ffffff" font-size="11.1" text-anchor="start" >SFC-6km</text>
<text x="611.8" y="694.4" fill="#ffffff" font-size="11.1" text-anchor="end" >69</text>
<text x="686.9" y="694.4" fill="#ffffff" font-size="11.1" text-anchor="end" >216/39</text>
<text x="762" y="694.4" fill="#ffffff" font-size="11.1" text-anchor="end" >142/15</text>
<text x="390.7" y="703.3" fill="#ffffff" font-size="11.1" text-anchor="start" >SFC-8km</text>
<text x="611.8" y="704.6" fill="#ffffff" font-size="11.1" text-anchor="end" >76</text>
<text x="686.9" y="704.6" fill="#ffffff" font-size="11.1" text-anchor="end" >219/42</text>
<text x="762" y="704.6" fill="#ffffff" font-size="11.1" text-anchor="end" >158/15</text>
<text x="390.7" y="714" fill="#ffffff" font-size="11.1" text-anchor="start" >LCL-EL (Cloud Layer)</text>
<text x="611.8" y="715.3" fill="#ffffff" font-size="11.1" text-anchor="end" >92</text>
<text x="686.9" y="715.3" fill="#ffffff" font-size="11.1" text-anchor="end" >226/52</text>
<text x="762" y="715.3" fill="#ffffff" font-size="11.1" text-anchor="end" >197/18</text>
<text x="390.7" y="724.4" fill="#ffffff" font-size="11.1" text-anchor="start" >Eff Shear (EBWD)</text>
<text x="611.8" y="725.7" fill="#ffffff" font-size="11.1" text-anchor="end" >69</text>
<text x="686.9" y="725.7" fill="#ffffff" font-size="11.1" text-anchor="end" >215/38</text>
<text x="762" y="725.7" fill="#ffffff" font-size="11.1" text-anchor="end" >141/15</text>
<text x="390.7" y="740.2" fill="#ffffff" font-size="11.1" text-anchor="start" >BRN Shear =</text>
<text x="611.8" y="741.5" fill="#ffffff" font-size="11.1" text-anchor="end" >148 m2/s2</text>
<text x="390.7" y="750.3" fill="#ffffff" font-size="11.1" text-anchor="start" >4-6km SR Wind =</text>
<text x="611.8" y="751.6" fill="#ffffff" font-size="11.1" text-anchor="end" >247/19 kt</text>
<text x="390.7" y="766.4" fill="#ffffff" font-size="11.1" text-anchor="start" >...Storm Motion Vectors...</text>
<text x="390.7" y="777.1" fill="#ffffff" font-size="11.1" text-anchor="start" >Bunkers Right =</text>
<text x="611.8" y="778.4" fill="#1ca0d8" font-size="11.1" text-anchor="end" >239/38 kt</text>
<text x="390.7" y="787.3" fill="#ffffff" font-size="11.1" text-anchor="start" >Bunkers Left =</text>
<text x="611.8" y="788.6" fill="#e05050" font-size="11.1" text-anchor="end" >204/50 kt</text>
<text x="390.7" y="798" fill="#ffffff" font-size="11.1" text-anchor="start" >Corfidi Downshear =</text>
<text x="611.8" y="799.3" fill="#ffffff" font-size="11.1" text-anchor="end" >245/93 kt</text>
<text x="390.7" y="808.2" fill="#ffffff" font-size="11.1" text-anchor="start" >Corfidi Upshear =</text>
<text x="611.8" y="809.5" fill="#ffffff" font-size="11.1" text-anchor="end" >266/42 kt</text>
<text x="686.9" y="794.3" fill="#1a70c8" font-size="11.1" text-anchor="middle" >1km &amp; 6km AGL</text>
<text x="686.9" y="807" fill="#1a70c8" font-size="11.1" text-anchor="middle" >Wind Barbs</text>
<path d="M688,761.5 L670,773 M670,773 L666,767 M673,771 L669,764.5 M676,769 L672,762.5" fill="none" stroke="#2070c0" stroke-width="1.2"/>
<path d="M688,761.5 L686,781 M687,770 L680,770 M686.7,774 L679.5,774 M686.3,778 L679,778 M686,781 L678.5,781" fill="none" stroke="#b01818" stroke-width="1.2"/>
<text x="960" y="647.5" fill="#ffffff" font-size="18.2" text-anchor="middle" >SARS - Sounding Analogue System</text>
<line x1="769" y1="653.2" x2="1150" y2="653.2" stroke="#b0b0b0" stroke-width="1.5" />
<line x1="960.5" y1="654" x2="960.5" y2="829" stroke="#b0b0b0" stroke-width="1.5" />
<text x="863" y="666.5" fill="#ffffff" font-size="12.6" text-anchor="middle" letter-spacing="0.6">SUPERCELL</text>
<text x="1052.4" y="666.5" fill="#ffffff" font-size="12.6" text-anchor="middle" letter-spacing="0.6">SGFNT HAIL</text>
<text x="773" y="680" fill="#e00000" font-size="11.4" text-anchor="start" >03050500.UMN</text>
<text x="913.3" y="680" fill="#e00000" font-size="11.4" text-anchor="start" >SIG</text>
<text x="773" y="690.4" fill="#e00000" font-size="11.4" text-anchor="start" >03050501.LZK</text>
<text x="913.3" y="690.4" fill="#e00000" font-size="11.4" text-anchor="start" >SIG</text>
<text x="773" y="700.7" fill="#1ca0d8" font-size="11.4" text-anchor="start" >03050423.C35</text>
<text x="913.3" y="700.7" fill="#1ca0d8" font-size="11.4" text-anchor="start" >WEAK</text>
<text x="773" y="711" fill="#a06a1a" font-size="11.4" text-anchor="start" >03042400.SEP</text>
<text x="913.3" y="711" fill="#a06a1a" font-size="11.4" text-anchor="start" >NON</text>
<text x="773" y="721.4" fill="#a06a1a" font-size="11.4" text-anchor="start" >03050520.MKL</text>
<text x="913.3" y="721.4" fill="#a06a1a" font-size="11.4" text-anchor="start" >NON</text>
<text x="966.9" y="680" fill="#e00000" font-size="11.4" text-anchor="start" >03050518.BNA</text>
<text x="1134" y="680" fill="#e00000" font-size="11.4" text-anchor="end" >4.25</text>
<text x="966.9" y="690.4" fill="#e00000" font-size="11.4" text-anchor="start" >95042000.FTD</text>
<text x="1134" y="690.4" fill="#e00000" font-size="11.4" text-anchor="end" >2.75</text>
<text x="966.9" y="700.7" fill="#e00000" font-size="11.4" text-anchor="start" >02060500.AMA</text>
<text x="1134" y="700.7" fill="#e00000" font-size="11.4" text-anchor="end" >2.75</text>
<text x="966.9" y="711" fill="#e00000" font-size="11.4" text-anchor="start" >01042200.DDC</text>
<text x="1134" y="711" fill="#e00000" font-size="11.4" text-anchor="end" >2.50</text>
<text x="863.5" y="814.5" fill="#d000d0" font-size="11.9" text-anchor="middle" >(15 loose matches)</text>
<text x="863.5" y="827" fill="#d000d0" font-size="11.9" text-anchor="middle" >SARS: 73% TOR</text>
<text x="1053" y="814.5" fill="#d000d0" font-size="11.9" text-anchor="middle" >(73 loose matches)</text>
<text x="1053" y="827" fill="#d000d0" font-size="11.9" text-anchor="middle" >SARS: 88% SIG</text>
<line x1="1152" y1="814.6" x2="1533" y2="814.6" stroke="#17528e" stroke-width="1.5" stroke-dasharray="3.2,1.7"/>
<text x="1160" y="822.8" fill="#ffffff" font-size="11.1" text-anchor="middle" >0</text>
<line x1="1152" y1="799" x2="1533" y2="799" stroke="#17528e" stroke-width="1.5" stroke-dasharray="3.2,1.7"/>
<text x="1160" y="807.2" fill="#ffffff" font-size="11.1" text-anchor="middle" >1</text>
<line x1="1152" y1="783.4" x2="1533" y2="783.4" stroke="#17528e" stroke-width="1.5" stroke-dasharray="3.2,1.7"/>
<text x="1160" y="791.6" fill="#ffffff" font-size="11.1" text-anchor="middle" >2</text>
<line x1="1152" y1="767.8" x2="1533" y2="767.8" stroke="#17528e" stroke-width="1.5" stroke-dasharray="3.2,1.7"/>
<text x="1160" y="776" fill="#ffffff" font-size="11.1" text-anchor="middle" >3</text>
<line x1="1152" y1="752.2" x2="1533" y2="752.2" stroke="#17528e" stroke-width="1.5" stroke-dasharray="3.2,1.7"/>
<text x="1160" y="760.4" fill="#ffffff" font-size="11.1" text-anchor="middle" >4</text>
<line x1="1152" y1="736.6" x2="1533" y2="736.6" stroke="#17528e" stroke-width="1.5" stroke-dasharray="3.2,1.7"/>
<text x="1160" y="744.8" fill="#ffffff" font-size="11.1" text-anchor="middle" >5</text>
<line x1="1152" y1="721" x2="1533" y2="721" stroke="#17528e" stroke-width="1.5" stroke-dasharray="3.2,1.7"/>
<text x="1160" y="729.2" fill="#ffffff" font-size="11.1" text-anchor="middle" >6</text>
<line x1="1152" y1="705.4" x2="1533" y2="705.4" stroke="#17528e" stroke-width="1.5" stroke-dasharray="3.2,1.7"/>
<text x="1160" y="713.6" fill="#ffffff" font-size="11.1" text-anchor="middle" >7</text>
<line x1="1152" y1="689.8" x2="1533" y2="689.8" stroke="#17528e" stroke-width="1.5" stroke-dasharray="3.2,1.7"/>
<text x="1160" y="698" fill="#ffffff" font-size="11.1" text-anchor="middle" >8</text>
<line x1="1152" y1="674.2" x2="1533" y2="674.2" stroke="#17528e" stroke-width="1.5" stroke-dasharray="3.2,1.7"/>
<text x="1160" y="682.4" fill="#ffffff" font-size="11.1" text-anchor="middle" >9</text>
<line x1="1152" y1="658.6" x2="1533" y2="658.6" stroke="#17528e" stroke-width="1.5" stroke-dasharray="3.2,1.7"/>
<text x="1160" y="666.8" fill="#ffffff" font-size="11.1" text-anchor="middle" >10</text>
<line x1="1152" y1="643" x2="1533" y2="643" stroke="#17528e" stroke-width="1.5" stroke-dasharray="3.2,1.7"/>
<text x="1160" y="651.2" fill="#ffffff" font-size="11.1" text-anchor="middle" >11</text>
<text x="1344.7" y="640.5" fill="#ffffff" font-size="13.6" text-anchor="middle" >Effective Layer STP (with CIN)</text>
<line x1="1152" y1="695.6" x2="1533" y2="695.6" stroke="#d00000" stroke-width="2" />
<line x1="1206.5" y1="642.9" x2="1206.5" y2="685.5" stroke="#00ff00" stroke-width="2" />
<line x1="1206.5" y1="776.6" x2="1206.5" y2="799.6" stroke="#00ff00" stroke-width="2" />
<rect x="1192.6" y="685.5" width="27.8" height="91.1" fill="none" stroke="#00ff00" stroke-width="2" />
<line x1="1192.6" y1="733.3" x2="1220.4" y2="733.3" stroke="#00ff00" stroke-width="2" />
<text x="1206.5" y="831.5" fill="#ffffff" font-size="9" text-anchor="middle" >EF4+</text>
<line x1="1260.8" y1="683.7" x2="1260.8" y2="746" stroke="#00ff00" stroke-width="2" />
<line x1="1260.8" y1="802.1" x2="1260.8" y2="815.6" stroke="#00ff00" stroke-width="2" />
<rect x="1247" y="746" width="27.6" height="56.1" fill="none" stroke="#00ff00" stroke-width="2" />
<line x1="1247" y1="780" x2="1274.6" y2="780" stroke="#00ff00" stroke-width="2" />
<text x="1260.8" y="831.5" fill="#ffffff" font-size="9" text-anchor="middle" >EF3</text>
<line x1="1315.2" y1="728.2" x2="1315.2" y2="759" stroke="#00ff00" stroke-width="2" />
<line x1="1315.2" y1="808.5" x2="1315.2" y2="818.7" stroke="#00ff00" stroke-width="2" />
<rect x="1301.4" y="759" width="27.5" height="49.5" fill="none" stroke="#00ff00" stroke-width="2" />
<line x1="1301.4" y1="791.2" x2="1328.9" y2="791.2" stroke="#00ff00" stroke-width="2" />
<text x="1315.2" y="831.5" fill="#ffffff" font-size="9" text-anchor="middle" >EF2</text>
<line x1="1370.4" y1="745.6" x2="1370.4" y2="776.6" stroke="#00ff00" stroke-width="2" />
<line x1="1370.4" y1="813.6" x2="1370.4" y2="818.7" stroke="#00ff00" stroke-width="2" />
<rect x="1356.6" y="776.6" width="27.6" height="37" fill="none" stroke="#00ff00" stroke-width="2" />
<line x1="1356.6" y1="799" x2="1384.2" y2="799" stroke="#00ff00" stroke-width="2" />
<text x="1370.4" y="831.5" fill="#ffffff" font-size="9" text-anchor="middle" >EF1</text>
<line x1="1424.7" y1="758.8" x2="1424.7" y2="786.3" stroke="#00ff00" stroke-width="2" />
<line x1="1424.7" y1="816.6" x2="1424.7" y2="818.7" stroke="#00ff00" stroke-width="2" />
<rect x="1411" y="786.3" width="27.4" height="30.3" fill="none" stroke="#00ff00" stroke-width="2" />
<line x1="1411" y1="805.4" x2="1438.4" y2="805.4" stroke="#00ff00" stroke-width="2" />
<text x="1424.7" y="831.5" fill="#ffffff" font-size="9" text-anchor="middle" >EF0</text>
<line x1="1479.1" y1="790.1" x2="1479.1" y2="807.2" stroke="#00ff00" stroke-width="2" />
<line x1="1479.1" y1="818.2" x2="1479.1" y2="818.2" stroke="#00ff00" stroke-width="2" />
<rect x="1465.2" y="807.2" width="27.7" height="11" fill="none" stroke="#00ff00" stroke-width="2" />
<line x1="1465.2" y1="814.9" x2="1492.9" y2="814.9" stroke="#00ff00" stroke-width="2" />
<text x="1479.1" y="831.5" fill="#ffffff" font-size="9" text-anchor="middle" >NONTOR</text>
<rect x="1343" y="643.4" width="187.6" height="83.1" fill="#000" stroke="#ffffff" stroke-width="2" />
<line x1="1343" y1="666.4" x2="1530.6" y2="666.4" stroke="#ffffff" stroke-width="2" />
<text x="1346" y="654" fill="#ffffff" font-size="9.8" text-anchor="start" >Prob EF2+ torn with supercell</text>
<text x="1346" y="664.2" fill="#ffffff" font-size="9.8" text-anchor="start" >Sample CLIMO = .15 sigtor</text>
<text x="1346" y="675.2" fill="#d8d800" font-size="9.8" text-anchor="start" >based on CAPE:</text>
<text x="1484.3" y="675.2" fill="#d8d800" font-size="9.8" text-anchor="start" >0.18</text>
<text x="1346" y="684.7" fill="#d8d800" font-size="9.8" text-anchor="start" >based on LCL:</text>
<text x="1484.3" y="684.7" fill="#d8d800" font-size="9.8" text-anchor="start" >0.19</text>
<text x="1346" y="694.2" fill="#d8d800" font-size="9.8" text-anchor="start" >based on ESRH:</text>
<text x="1484.3" y="694.2" fill="#d8d800" font-size="9.8" text-anchor="start" >0.2</text>
<text x="1346" y="703.7" fill="#d8d800" font-size="9.8" text-anchor="start" >based on EBWD:</text>
<text x="1484.3" y="703.7" fill="#d8d800" font-size="9.8" text-anchor="start" >0.27</text>
<text x="1346" y="713.2" fill="#e00000" font-size="9.8" text-anchor="start" >based on STPC:</text>
<text x="1484.3" y="713.2" fill="#e00000" font-size="9.8" text-anchor="start" >0.34</text>
<text x="1346" y="722.7" fill="#e00000" font-size="9.8" text-anchor="start" >based on STP_fixed:</text>
<text x="1484.3" y="722.7" fill="#e00000" font-size="9.8" text-anchor="start" >0.39</text>
<rect x="2" y="630" width="383.5" height="200" fill="none" stroke="#3aa3dc" stroke-width="2" />
<rect x="386.5" y="630" width="381.5" height="200" fill="none" stroke="#3aa3dc" stroke-width="2" />
<rect x="769" y="630" width="382" height="200" fill="none" stroke="#3aa3dc" stroke-width="2" />
<rect x="1152" y="630" width="382.5" height="200" fill="none" stroke="#3aa3dc" stroke-width="2" />
<rect x="0" y="0" width="1536" height="18" fill="#ffffff" stroke="none" stroke-width="1" />
<rect x="2.5" y="3.5" width="11" height="10" fill="#dfe8ee" stroke="#8a9aa8" stroke-width="1"/><rect x="4" y="6" width="4" height="6" fill="#2a9a6a"/><rect x="9" y="6" width="3" height="2" fill="#3a7ac0"/>
<text x="18.5" y="13" fill="#000000" font-size="11.5" text-anchor="start" textLength="333" lengthAdjust="spacingAndGlyphs">SHARPpy: Sounding and Hodograph Analysis and Research Program in Python</text>
<line x1="1438" y1="8.5" x2="1448" y2="8.5" stroke="#000" stroke-width="1" />
<path d="M1475.5,6.5h7v7h-7z M1477.5,6.5v-2h7v7h-2" fill="none" stroke="#000" stroke-width="1"/>
<path d="M1511,3.5l9,9 M1520,3.5l-9,9" fill="none" stroke="#000" stroke-width="1"/>
<text x="25" y="29.5" fill="#ffffff" font-size="11.5" text-anchor="start" style="white-space:pre" textLength="199" lengthAdjust="spacingAndGlyphs">KJWG   20160509/0000  (12Z  NAM  F036)</text>
<text x="1419.4" y="29" fill="#ffffff" font-size="10.5" text-anchor="start" textLength="116" lengthAdjust="spacingAndGlyphs">SHARPpy Beta v1.2.0 El Reno</text>
</svg>
</body></html>
